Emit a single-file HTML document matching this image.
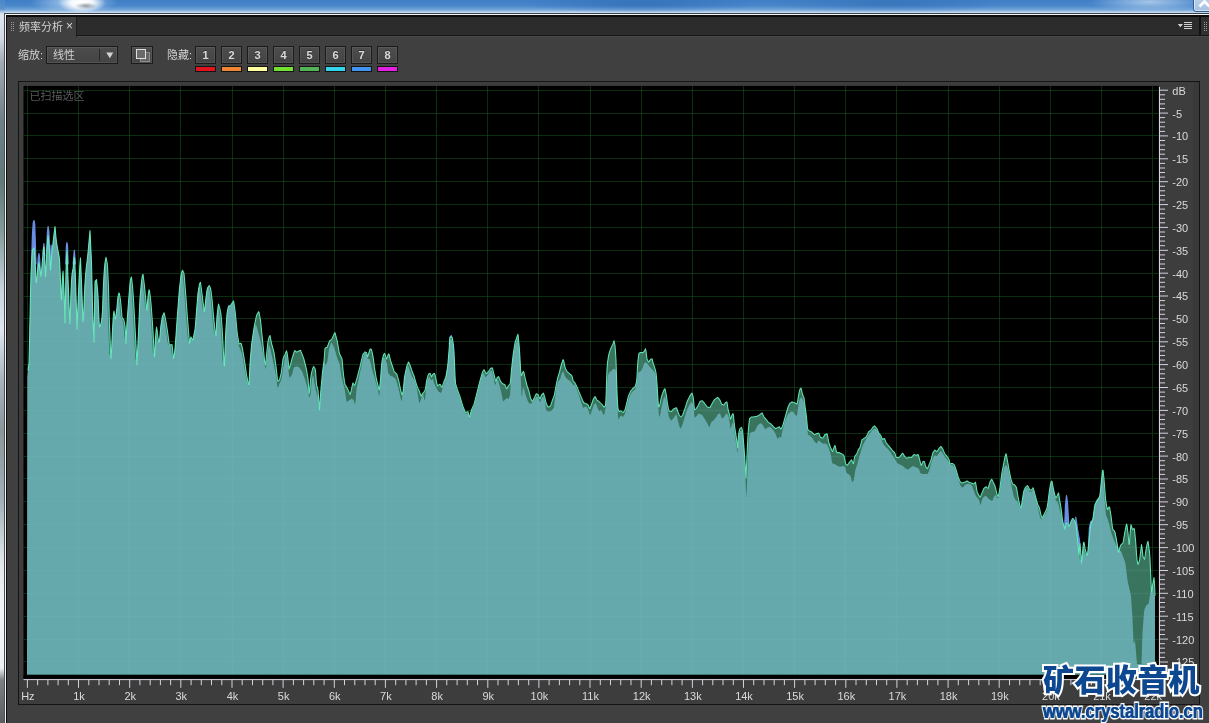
<!DOCTYPE html>
<html lang="zh-CN">
<head>
<meta charset="utf-8">
<title>频率分析</title>
<style>
html,body{margin:0;padding:0;overflow:hidden;}
body{width:1209px;height:723px;overflow:hidden;position:relative;background:#404040;
 font-family:"Liberation Sans","Noto Sans CJK SC",sans-serif;font-size:11px;color:#cfcfcf;}
.abs{position:absolute;}
.lbl,.nb,#tab span,#wm1,#wm2,svg.chart{will-change:transform;}
#aerotop{left:0;top:0;width:1209px;height:14px;
 background:
  radial-gradient(ellipse 11px 3.5px at 86px 6px,rgba(110,120,135,.75),rgba(110,120,135,0) 100%),
  radial-gradient(ellipse 24px 10px at 82px 3px,rgba(255,255,255,1),rgba(255,255,255,.9) 45%,rgba(255,255,255,0) 100%),
  radial-gradient(ellipse 44px 12px at 74px 2px,rgba(200,225,250,.8),rgba(255,255,255,0) 100%),
  radial-gradient(ellipse 60px 10px at 1150px 2px,rgba(190,215,240,.8),rgba(255,255,255,0) 100%),
  radial-gradient(ellipse 120px 9px at 640px 4px,rgba(40,100,170,.55),rgba(40,100,170,0) 100%),
  radial-gradient(ellipse 120px 9px at 890px 4px,rgba(40,100,170,.45),rgba(40,100,170,0) 100%),
  linear-gradient(to bottom,#3f7fc6 0,#4a88cc 6px,#78a8da 10px,#c4daf0 12.5px,#fff 14px);}
#aeroleft{left:0;top:0;width:5px;height:723px;
 background:linear-gradient(to bottom,#4a86c8 0,#5c92cc 9px,#dfe7ef 14px,#d4dbe2 38px,#a2aab2 62px,#6f8088 120px,#5f7a78 180px,#7f9a98 230px,#c8d4dc 290px,#dfe6ec 330px,#a8b4bc 380px,#8a969a 430px,#9fb0b4 500px,#dfe6ea 560px,#f2f5f7 610px,#eef1f3 668px,#7a8084 680px,#5a5e62 723px);}
#frame-l{left:4px;top:13px;width:1px;height:710px;background:#4a5056;}
#frame-l2{left:5px;top:14px;width:1px;height:709px;background:#f4f6f8;}
#frame-l3{left:6px;top:15px;width:1px;height:708px;background:#0c0c0c;}
#frame-t{left:4px;top:13px;width:1205px;height:1px;background:#3a4046;}
#frame-t2{left:5px;top:14px;width:1204px;height:1px;background:#f4f6f8;}
#frame-t3{left:6px;top:15px;width:1203px;height:2px;background:#0c0c0c;}
#closebtn{left:1193px;top:-2px;width:20px;height:12px;border:1px solid #2f5f9a;border-radius:0 0 0 3px;background:linear-gradient(#b8d0ea,#a6c2e2);box-shadow:inset 0 0 0 1px rgba(255,255,255,.5);}
#tabbar{left:7px;top:17px;width:1192px;height:18px;background:#2c2c2c;}
#tabline{left:7px;top:35px;width:1202px;height:1px;background:#161616;box-shadow:0 1px 0 #4a4a4a;}
#tab{left:7px;top:17px;width:69px;height:20px;background:#404040;border-right:1px solid #1c1c1c;box-sizing:content-box;}
#tab .t{position:absolute;left:12px;top:3px;font-size:11px;line-height:14px;color:#d0d0d0;white-space:nowrap;}
#tab .x{position:absolute;left:59px;top:2px;font-size:12px;line-height:14px;color:#d6d6d6;}
.grip{width:1px;height:1px;background:#9a9a9a;
 box-shadow:0 2px #9a9a9a,0 4px #9a9a9a,0 6px #9a9a9a,0 8px #9a9a9a,2px 0 #9a9a9a,2px 2px #9a9a9a,2px 4px #9a9a9a,2px 6px #9a9a9a,2px 8px #9a9a9a;}
#vsep{left:1199px;top:17px;width:1.5px;height:18px;background:#121212;}
#rtab{left:1200.5px;top:17px;width:9px;height:18px;background:#313131;}
#menu{left:1177px;top:21px;width:16px;height:9px;}
.lbl{font-size:11px;line-height:14px;color:#d2d2d2;white-space:nowrap;}
.btn{box-sizing:border-box;border:1px solid #1b1b1b;background:linear-gradient(#4d4d4d,#444);box-shadow:inset 0 0 0 1px rgba(255,255,255,.07);}
.nb{width:21px;height:18px;top:46px;text-align:center;font-size:11px;font-weight:bold;line-height:17px;color:#dadada;text-shadow:0 -1px 0 rgba(0,0,0,.35);}
.cb{box-sizing:border-box;width:21px;height:6px;top:66px;border:1px solid #141414;}
#chartframe{left:18px;top:81px;width:1182px;height:624px;box-sizing:border-box;border:1px solid #141414;background:#3d3d3d;}
svg.chart{position:absolute;left:0;top:0;}
svg .rl{font-family:"Liberation Sans",sans-serif;font-size:11px;fill:#dadada;}
svg .scan{font-family:"Liberation Sans","Noto Sans CJK SC",sans-serif;font-size:11px;fill:#5a5a5a;}
#wm1{left:1042.5px;top:657.5px;font-family:"Noto Sans CJK SC","Liberation Sans",sans-serif;font-weight:900;font-size:31px;line-height:40px;letter-spacing:0.4px;color:#0d4790;white-space:nowrap;
 -webkit-text-stroke:4px #fff;paint-order:stroke fill;}
#wm2{left:1043px;top:698.5px;font-family:"Liberation Sans",sans-serif;font-weight:bold;font-size:20px;line-height:24px;color:#0d4790;white-space:nowrap;letter-spacing:0;transform-origin:0 0;transform:scaleX(0.825);
 -webkit-text-stroke:3.2px #fff;paint-order:stroke fill;text-shadow:0.4px 0 0 #0d4790,-0.4px 0 0 #0d4790;}
</style>
</head>
<body>
<div class="abs" id="aerotop"></div>
<div class="abs" id="aeroleft"></div>
<div class="abs" id="frame-t"></div><div class="abs" id="frame-t2"></div><div class="abs" id="frame-t3"></div>
<div class="abs" id="frame-l"></div><div class="abs" id="frame-l2"></div><div class="abs" id="frame-l3"></div>
<div class="abs" id="closebtn"><svg width="20" height="12" viewBox="0 0 20 12" style="position:absolute;left:0;top:0"><path d="M5.5 7.5 L10.5 2.5 L15.5 7.5" fill="none" stroke="#fff" stroke-width="2.6" stroke-linejoin="miter"/></svg></div>

<div class="abs" id="tabbar"></div>
<div class="abs" id="tabline"></div>
<div class="abs" id="tab"><div class="abs grip" style="left:4px;top:5px"></div><span class="t">频率分析</span><span class="x">×</span></div>
<div class="abs" id="vsep"></div>
<div class="abs" id="rtab"><div class="abs grip" style="left:3px;top:5px"></div></div>
<svg class="abs" id="menu" viewBox="0 0 16 9"><path d="M0.8 3 H6 L3.4 6.2Z" fill="#d0d0d0"/><path d="M7 1.5H15M7 3.5H15M7 5.5H15M7 7.5H15" stroke="#cfcfcf" stroke-width="1"/></svg>

<!-- toolbar -->
<div class="abs lbl" style="left:18px;top:48px">缩放:</div>
<div class="abs btn" style="left:46px;top:46px;width:72px;height:18px">
  <span class="abs lbl" style="left:6px;top:1px">线性</span>
  <div class="abs" style="left:52px;top:2px;width:1px;height:12px;background:#262626"></div>
  <svg class="abs" style="left:58px;top:5px" width="10" height="7" viewBox="0 0 10 7"><path d="M1.3 0.6H8.3L4.8 6.2Z" fill="#d4d4d4"/></svg>
</div>
<div class="abs btn" style="left:131px;top:46px;width:22px;height:18px">
  <svg class="abs" style="left:3px;top:1px" width="16" height="15" viewBox="0 0 16 15"><rect x="5.5" y="4.5" width="9" height="9" fill="#666" stroke="#c4c4c4" stroke-dasharray="1 1"/><rect x="1.5" y="1.5" width="9" height="9" fill="#6a6a6a" stroke="#e0e0e0"/></svg>
</div>
<div class="abs lbl" style="left:167px;top:48px">隐藏:</div>
<div class="abs btn nb" style="left:195px">1</div>
<div class="abs btn nb" style="left:221px">2</div>
<div class="abs btn nb" style="left:247px">3</div>
<div class="abs btn nb" style="left:273px">4</div>
<div class="abs btn nb" style="left:299px">5</div>
<div class="abs btn nb" style="left:325px">6</div>
<div class="abs btn nb" style="left:351px">7</div>
<div class="abs btn nb" style="left:377px">8</div>
<div class="abs cb" style="left:195px;background:#e0141e"></div>
<div class="abs cb" style="left:221px;background:#f08634"></div>
<div class="abs cb" style="left:247px;background:#ffffa2"></div>
<div class="abs cb" style="left:273px;background:#74e032"></div>
<div class="abs cb" style="left:299px;background:#52b456"></div>
<div class="abs cb" style="left:325px;background:#34d4ea"></div>
<div class="abs cb" style="left:351px;background:#4292f0"></div>
<div class="abs cb" style="left:377px;background:#e022e0"></div>

<div class="abs" id="chartframe"><div class="abs" style="right:0;top:0;width:6px;height:622px;background:#393939"></div></div>
<svg class="chart" width="1209" height="723" viewBox="0 0 1209 723">
<rect x="23.5" y="85.9" width="1135.2" height="592.7" fill="#000"/>
<path d="M27.5 85.9V678.6M78.5 85.9V678.6M129.5 85.9V678.6M180.5 85.9V678.6M232.5 85.9V678.6M283.5 85.9V678.6M334.5 85.9V678.6M385.5 85.9V678.6M436.5 85.9V678.6M487.5 85.9V678.6M538.5 85.9V678.6M590.5 85.9V678.6M641.5 85.9V678.6M692.5 85.9V678.6M743.5 85.9V678.6M794.5 85.9V678.6M845.5 85.9V678.6M896.5 85.9V678.6M948.5 85.9V678.6M999.5 85.9V678.6M1050.5 85.9V678.6M1101.5 85.9V678.6M1152.5 85.9V678.6M23.5 90.5H1158.7M23.5 113.5H1158.7M23.5 135.5H1158.7M23.5 158.5H1158.7M23.5 181.5H1158.7M23.5 204.5H1158.7M23.5 227.5H1158.7M23.5 250.5H1158.7M23.5 273.5H1158.7M23.5 296.5H1158.7M23.5 318.5H1158.7M23.5 341.5H1158.7M23.5 364.5H1158.7M23.5 387.5H1158.7M23.5 410.5H1158.7M23.5 433.5H1158.7M23.5 456.5H1158.7M23.5 478.5H1158.7M23.5 501.5H1158.7M23.5 524.5H1158.7M23.5 547.5H1158.7M23.5 570.5H1158.7M23.5 593.5H1158.7M23.5 616.5H1158.7M23.5 639.5H1158.7M23.5 661.5H1158.7" stroke="#12501a" stroke-width="1" fill="none" opacity="0.58"/>
<polygon points="31.6,262 32.4,236 33.2,223 34,220.5 34.7,224 35.4,245 35.9,264" fill="#6b8fe2" stroke="#6b8fe2" stroke-width="1.2" stroke-linejoin="round"/>
<polygon points="37.5,272 38.2,258 38.9,253.7 39.6,258 40.3,272" fill="#6b8fe2" stroke="#6b8fe2" stroke-width="1.2" stroke-linejoin="round"/>
<polygon points="42.9,254 43.9,243.5 44.8,256" fill="#6b8fe2" stroke="#6b8fe2" stroke-width="1.2" stroke-linejoin="round"/>
<polygon points="46.7,252 47.4,232 48.1,226.6 48.9,232 49.6,252" fill="#6b8fe2" stroke="#6b8fe2" stroke-width="1.2" stroke-linejoin="round"/>
<polygon points="50.3,266 51.1,245 52,258" fill="#6b8fe2" stroke="#6b8fe2" stroke-width="1.2" stroke-linejoin="round"/>
<polygon points="65.8,264 66.4,246 66.9,242.6 67.5,246 68.1,264" fill="#6b8fe2" stroke="#6b8fe2" stroke-width="1.2" stroke-linejoin="round"/>
<polygon points="73.2,264 74.3,250.4 75.4,264" fill="#6b8fe2" stroke="#6b8fe2" stroke-width="1.2" stroke-linejoin="round"/>
<polygon points="449.3,344 450.2,337 451.2,335.5 452.2,341 452.6,346" fill="#6b8fe2" stroke="#6b8fe2" stroke-width="1.2" stroke-linejoin="round"/>
<polygon points="1064.5,532 1065.5,505 1066.5,495.6 1067.5,503 1068.8,525 1068.8,536" fill="#6b8fe2" stroke="#6b8fe2" stroke-width="1.2" stroke-linejoin="round"/>
<polygon points="1075.8,517 1077.5,529 1079.6,541 1079.6,560 1075.8,560" fill="#6b8fe2" stroke="#6b8fe2" stroke-width="1.2" stroke-linejoin="round"/>
<polygon points="1088.4,548 1089.4,528 1090.6,522 1091.8,521 1091.8,548" fill="#6b8fe2" stroke="#6b8fe2" stroke-width="1.2" stroke-linejoin="round"/>
<polygon points="1113.3,530 1115,533 1117,545 1118.5,552 1118.5,562 1113.3,562" fill="#6b8fe2" stroke="#6b8fe2" stroke-width="1.2" stroke-linejoin="round"/>
<defs><polygon id="pe" points="27.0,674.8 27.0,674.8 27.5,377.0 28.0,370.5 28.5,366.8 29.0,363.2 29.5,341.8 30.0,316.5 30.5,292.8 31.0,273.3 31.5,263.2 32.0,256.5 32.5,250.0 33.0,249.3 33.5,248.7 34.0,248.0 34.5,253.8 35.0,259.7 35.5,269.2 36.0,281.2 36.5,282.6 37.0,276.9 37.5,271.1 38.0,267.5 38.5,264.5 39.0,262.7 39.5,266.4 40.0,270.0 40.5,273.2 41.0,276.4 41.5,271.9 42.0,265.6 42.5,259.3 43.0,254.0 43.5,249.0 44.0,246.9 44.5,254.8 45.0,265.8 45.5,276.8 46.0,269.3 46.5,257.2 47.0,247.5 47.5,241.4 48.0,235.2 48.5,239.3 49.0,245.8 49.5,252.5 50.0,259.8 50.5,270.0 51.0,264.0 51.5,258.0 52.0,252.0 52.5,247.6 53.0,243.1 53.5,238.7 54.0,234.4 54.5,230.5 55.0,226.6 55.5,232.2 56.0,237.8 56.5,241.9 57.0,245.2 57.5,248.0 58.0,250.5 58.5,253.1 59.0,255.6 59.5,259.5 60.0,269.2 60.5,281.0 61.0,296.0 61.5,299.9 62.0,287.1 62.5,277.9 63.0,271.0 63.5,280.5 64.0,290.0 64.5,306.5 65.0,323.0 65.5,296.5 66.0,270.0 66.5,257.8 67.0,250.7 67.5,264.2 68.0,277.6 68.5,290.6 69.0,303.6 69.5,316.6 70.0,323.8 70.5,307.6 71.0,291.5 71.5,281.0 72.0,274.3 72.5,271.2 73.0,268.9 73.5,264.2 74.0,257.8 74.5,257.8 75.0,267.4 75.5,278.4 76.0,295.2 76.5,312.1 77.0,329.0 77.5,316.8 78.0,304.6 78.5,292.3 79.0,281.3 79.5,272.1 80.0,262.8 80.5,257.9 81.0,270.2 81.5,282.6 82.0,295.3 82.5,308.5 83.0,321.7 83.5,319.1 84.0,306.0 84.5,292.9 85.0,282.5 85.5,276.2 86.0,270.0 86.5,265.8 87.0,261.7 87.5,257.5 88.0,252.8 88.5,247.2 89.0,241.6 89.5,236.1 90.0,230.5 90.5,241.0 91.0,251.5 91.5,262.0 92.0,283.8 92.5,305.6 93.0,319.1 93.5,330.6 94.0,342.0 94.5,311.8 95.0,281.5 95.5,280.8 96.0,280.2 96.5,279.5 97.0,284.4 97.5,289.2 98.0,295.6 98.5,308.1 99.0,320.5 99.5,327.0 100.0,326.2 100.5,324.9 101.0,323.6 101.5,321.0 102.0,317.4 102.5,310.3 103.0,295.7 103.5,284.1 104.0,274.4 104.5,267.9 105.0,262.5 105.5,259.9 106.0,257.3 106.5,259.7 107.0,262.1 107.5,266.1 108.0,276.6 108.5,287.1 109.0,307.5 109.5,325.7 110.0,336.7 110.5,350.7 111.0,358.7 111.5,351.9 112.0,340.8 112.5,330.1 113.0,320.9 113.5,314.4 114.0,311.0 114.5,314.5 115.0,318.1 115.5,318.8 116.0,315.4 116.5,311.9 117.0,307.1 117.5,301.5 118.0,296.6 118.5,294.7 119.0,292.9 119.5,294.0 120.0,297.1 120.5,300.2 121.0,305.5 121.5,311.3 122.0,317.1 122.5,318.5 123.0,318.8 123.5,319.1 124.0,320.8 124.5,323.4 125.0,326.0 125.5,332.5 126.0,343.4 126.5,332.4 127.0,322.8 127.5,315.9 128.0,309.0 128.5,302.3 129.0,295.8 129.5,289.8 130.0,283.9 130.5,280.1 131.0,277.9 131.5,277.0 132.0,281.7 132.5,286.4 133.0,292.8 133.5,299.3 134.0,308.2 134.5,317.2 135.0,326.7 135.5,336.4 136.0,346.0 136.5,354.8 137.0,364.7 137.5,353.7 138.0,342.7 138.5,331.7 139.0,320.7 139.5,309.0 140.0,297.8 140.5,292.4 141.0,286.9 141.5,281.5 142.0,278.2 142.5,274.8 143.0,274.4 143.5,278.3 144.0,282.2 144.5,286.3 145.0,291.6 145.5,296.8 146.0,302.3 146.5,308.0 147.0,310.3 147.5,302.3 148.0,296.8 148.5,293.2 149.0,289.7 149.5,290.6 150.0,294.6 150.5,298.5 151.0,303.5 151.5,310.0 152.0,316.7 152.5,323.5 153.0,332.0 153.5,340.9 154.0,349.9 154.5,356.7 155.0,349.6 155.5,338.0 156.0,331.8 156.5,327.0 157.0,329.6 157.5,334.0 158.0,338.0 158.5,340.1 159.0,342.2 159.5,341.1 160.0,335.3 160.5,329.5 161.0,324.8 161.5,321.8 162.0,318.7 162.5,316.1 163.0,315.0 163.5,313.8 164.0,312.7 164.5,314.4 165.0,316.8 165.5,319.2 166.0,322.0 166.5,325.1 167.0,328.1 167.5,331.2 168.0,335.1 168.5,339.3 169.0,343.4 169.5,344.1 170.0,344.7 170.5,345.4 171.0,345.1 171.5,344.8 172.0,344.5 172.5,348.9 173.0,354.4 173.5,358.4 174.0,355.6 174.5,352.9 175.0,348.6 175.5,342.1 176.0,335.4 176.5,328.2 177.0,320.9 177.5,313.8 178.0,307.3 178.5,300.8 179.0,294.4 179.5,288.3 180.0,284.0 180.5,279.7 181.0,275.4 181.5,272.9 182.0,271.5 182.5,270.2 183.0,271.3 183.5,272.4 184.0,273.5 184.5,278.9 185.0,285.3 185.5,291.8 186.0,298.3 186.5,305.1 187.0,312.1 187.5,318.5 188.0,324.4 188.5,330.6 189.0,337.0 189.5,343.4 190.0,341.0 190.5,338.6 191.0,336.9 191.5,337.9 192.0,338.9 192.5,339.9 193.0,339.5 193.5,337.0 194.0,334.5 194.5,332.0 195.0,329.5 195.5,324.8 196.0,317.9 196.5,311.4 197.0,305.0 197.5,299.1 198.0,293.1 198.5,290.1 199.0,287.0 199.5,284.0 200.0,283.0 200.5,282.4 201.0,286.2 201.5,290.0 202.0,293.9 202.5,297.9 203.0,302.0 203.5,305.8 204.0,309.5 204.5,311.5 205.0,306.7 205.5,301.8 206.0,297.5 206.5,294.0 207.0,290.4 207.5,288.0 208.0,287.2 208.5,286.5 209.0,285.8 209.5,285.8 210.0,287.1 210.5,288.4 211.0,290.9 211.5,295.0 212.0,299.1 212.5,304.4 213.0,310.3 213.5,316.3 214.0,321.1 214.5,326.0 215.0,330.8 215.5,333.5 216.0,335.7 216.5,324.7 217.0,316.3 217.5,311.8 218.0,307.3 218.5,304.0 219.0,305.7 219.5,307.3 220.0,309.1 220.5,311.9 221.0,314.6 221.5,319.8 222.0,326.3 222.5,335.1 223.0,344.1 223.5,353.8 224.0,363.5 224.5,365.8 225.0,351.6 225.5,337.5 226.0,327.7 226.5,320.8 227.0,313.9 227.5,310.7 228.0,308.4 228.5,306.2 229.0,305.8 229.5,306.0 230.0,306.2 230.5,305.4 231.0,304.7 231.5,303.9 232.0,303.2 232.5,302.4 233.0,301.7 233.5,300.9 234.0,303.6 234.5,307.1 235.0,310.6 235.5,314.5 236.0,320.0 236.5,325.5 237.0,331.0 237.5,335.0 238.0,338.0 238.5,341.0 239.0,344.0 239.5,343.8 240.0,343.6 240.5,343.4 241.0,343.2 241.5,344.5 242.0,346.7 242.5,348.9 243.0,351.8 243.5,354.8 244.0,357.7 244.5,360.8 245.0,364.2 245.5,367.6 246.0,371.1 246.5,374.5 247.0,377.1 247.5,379.8 248.0,382.4 248.5,385.0 249.0,384.9 249.5,373.9 250.0,363.6 250.5,357.1 251.0,351.2 251.5,345.2 252.0,341.3 252.5,338.0 253.0,334.7 253.5,331.3 254.0,328.0 254.5,325.1 255.0,322.7 255.5,320.4 256.0,318.0 256.5,315.7 257.0,314.5 257.5,313.6 258.0,312.7 258.5,311.7 259.0,312.2 259.5,314.9 260.0,317.5 260.5,320.1 261.0,324.7 261.5,329.9 262.0,335.0 262.5,339.8 263.0,344.7 263.5,349.7 264.0,354.9 264.5,360.1 265.0,362.6 265.5,365.0 266.0,361.1 266.5,355.6 267.0,350.3 267.5,345.8 268.0,341.3 268.5,339.2 269.0,337.7 269.5,336.2 270.0,335.5 270.5,338.0 271.0,340.5 271.5,343.0 272.0,345.1 272.5,347.0 273.0,348.8 273.5,350.7 274.0,352.5 274.5,355.7 275.0,359.2 275.5,362.7 276.0,366.4 276.5,370.9 277.0,375.4 277.5,379.9 278.0,381.4 278.5,380.9 279.0,380.4 279.5,379.9 280.0,377.9 280.5,375.9 281.0,373.9 281.5,371.1 282.0,367.1 282.5,363.1 283.0,359.1 283.5,357.5 284.0,356.5 284.5,355.5 285.0,354.5 285.5,353.2 286.0,352.0 286.5,350.8 287.0,352.3 287.5,355.6 288.0,359.3 288.5,364.2 289.0,369.1 289.5,367.7 290.0,366.3 290.5,364.7 291.0,362.7 291.5,360.7 292.0,358.7 292.5,357.1 293.0,355.5 293.5,354.0 294.0,352.5 294.5,350.9 295.0,350.6 295.5,351.1 296.0,351.6 296.5,352.1 297.0,351.9 297.5,351.6 298.0,351.4 298.5,351.1 299.0,350.9 299.5,350.7 300.0,350.5 300.5,350.3 301.0,351.6 301.5,352.8 302.0,354.1 302.5,355.3 303.0,356.6 303.5,357.8 304.0,359.5 304.5,361.5 305.0,363.5 305.5,365.5 306.0,367.5 306.5,369.7 307.0,372.7 307.5,375.7 308.0,378.7 308.5,385.2 309.0,393.9 309.5,391.7 310.0,386.2 310.5,380.7 311.0,375.8 311.5,373.4 312.0,371.0 312.5,368.9 313.0,367.8 313.5,366.6 314.0,367.0 314.5,367.8 315.0,368.5 315.5,370.7 316.0,377.2 316.5,384.3 317.0,386.3 317.5,388.3 318.0,390.3 318.5,396.8 319.0,403.8 319.5,410.1 320.0,401.8 320.5,395.0 321.0,388.5 321.5,383.0 322.0,377.5 322.5,372.0 323.0,368.1 323.5,364.6 324.0,361.1 324.5,354.7 325.0,348.2 325.5,348.0 326.0,347.8 326.5,347.6 327.0,347.4 327.5,346.5 328.0,345.1 328.5,343.7 329.0,342.4 329.5,341.0 330.0,340.6 330.5,340.2 331.0,339.8 331.5,339.4 332.0,338.8 332.5,337.6 333.0,336.5 333.5,335.4 334.0,334.3 334.5,333.2 335.0,332.7 335.5,334.6 336.0,336.5 336.5,338.4 337.0,340.2 337.5,342.7 338.0,345.6 338.5,348.4 339.0,351.3 339.5,353.8 340.0,354.8 340.5,355.8 341.0,356.8 341.5,357.8 342.0,358.8 342.5,363.8 343.0,369.7 343.5,374.7 344.0,378.3 344.5,381.9 345.0,384.4 345.5,385.3 346.0,386.1 346.5,386.9 347.0,387.8 347.5,388.6 348.0,389.8 348.5,390.9 349.0,392.1 349.5,393.3 350.0,394.4 350.5,393.5 351.0,391.3 351.5,389.0 352.0,386.8 352.5,384.5 353.0,382.9 353.5,383.8 354.0,384.7 354.5,385.5 355.0,384.9 355.5,383.2 356.0,381.6 356.5,379.9 357.0,378.2 357.5,376.5 358.0,374.5 358.5,372.5 359.0,370.6 359.5,368.6 360.0,366.6 360.5,364.5 361.0,362.3 361.5,360.1 362.0,358.0 362.5,355.8 363.0,354.2 363.5,353.6 364.0,353.0 364.5,352.3 365.0,351.9 365.5,352.1 366.0,352.4 366.5,352.6 367.0,354.2 367.5,356.7 368.0,355.9 368.5,354.2 369.0,352.5 369.5,350.8 370.0,349.1 370.5,349.1 371.0,349.1 371.5,349.6 372.0,351.8 372.5,354.1 373.0,356.3 373.5,359.7 374.0,363.8 374.5,367.9 375.0,370.9 375.5,373.9 376.0,376.9 376.5,379.5 377.0,381.5 377.5,383.5 378.0,385.5 378.5,387.7 379.0,389.9 379.5,389.4 380.0,384.6 380.5,379.8 381.0,372.3 381.5,365.8 382.0,361.2 382.5,359.0 383.0,356.8 383.5,354.5 384.0,354.0 384.5,353.4 385.0,354.2 385.5,355.8 386.0,357.4 386.5,359.0 387.0,357.7 387.5,356.5 388.0,355.2 388.5,354.0 389.0,354.0 389.5,356.2 390.0,358.3 390.5,360.4 391.0,362.0 391.5,363.5 392.0,365.0 392.5,366.5 393.0,368.0 393.5,369.4 394.0,370.9 394.5,371.8 395.0,372.3 395.5,372.8 396.0,373.3 396.5,373.8 397.0,374.6 397.5,376.3 398.0,378.1 398.5,379.8 399.0,382.0 399.5,384.5 400.0,387.0 400.5,389.5 401.0,391.3 401.5,393.1 402.0,394.9 402.5,393.4 403.0,391.9 403.5,388.0 404.0,382.4 404.5,376.9 405.0,374.6 405.5,372.2 406.0,369.9 406.5,367.6 407.0,365.7 407.5,364.5 408.0,363.2 408.5,362.0 409.0,362.7 409.5,363.9 410.0,365.2 410.5,366.5 411.0,368.0 411.5,369.4 412.0,370.9 412.5,372.2 413.0,373.5 413.5,374.8 414.0,376.0 414.5,377.8 415.0,379.5 415.5,381.2 416.0,382.9 416.5,384.4 417.0,385.9 417.5,387.4 418.0,388.5 418.5,389.5 419.0,390.5 419.5,391.6 420.0,393.1 420.5,394.6 421.0,396.1 421.5,395.8 422.0,394.3 422.5,393.6 423.0,393.1 423.5,392.6 424.0,392.0 424.5,391.1 425.0,390.2 425.5,388.7 426.0,385.0 426.5,381.3 427.0,379.1 427.5,377.4 428.0,375.6 428.5,374.1 429.0,373.9 429.5,373.6 430.0,373.4 430.5,374.1 431.0,375.5 431.5,376.9 432.0,375.9 432.5,375.0 433.0,374.1 433.5,373.9 434.0,373.6 434.5,373.4 435.0,374.7 435.5,377.1 436.0,379.5 436.5,381.9 437.0,384.1 437.5,385.8 438.0,385.5 438.5,385.1 439.0,384.8 439.5,384.5 440.0,384.2 440.5,384.9 441.0,385.9 441.5,386.9 442.0,387.4 442.5,385.9 443.0,384.4 443.5,382.9 444.0,381.6 444.5,380.3 445.0,379.1 445.5,377.9 446.0,376.3 446.5,373.3 447.0,370.4 447.5,367.4 448.0,362.7 448.5,356.9 449.0,350.7 449.5,343.5 450.0,337.0 450.5,337.0 451.0,337.0 451.5,337.0 452.0,337.0 452.5,338.9 453.0,342.1 453.5,345.4 454.0,351.9 454.5,362.8 455.0,375.6 455.5,383.5 456.0,385.2 456.5,386.8 457.0,388.4 457.5,389.9 458.0,391.2 458.5,392.6 459.0,393.9 459.5,395.2 460.0,396.6 460.5,398.3 461.0,400.0 461.5,401.6 462.0,403.3 462.5,405.0 463.0,406.4 463.5,407.7 464.0,409.0 464.5,410.4 465.0,411.7 465.5,412.4 466.0,412.3 466.5,412.1 467.0,411.9 467.5,411.8 468.0,411.6 468.5,413.9 469.0,416.1 469.5,417.5 470.0,415.5 470.5,413.5 471.0,411.5 471.5,410.0 472.0,408.8 472.5,407.7 473.0,406.5 473.5,405.4 474.0,404.2 474.5,402.7 475.0,400.7 475.5,398.7 476.0,396.7 476.5,394.7 477.0,392.7 477.5,390.7 478.0,388.7 478.5,386.7 479.0,384.7 479.5,382.7 480.0,380.8 480.5,379.0 481.0,377.2 481.5,375.4 482.0,373.6 482.5,371.9 483.0,371.2 483.5,370.4 484.0,369.7 484.5,370.1 485.0,371.4 485.5,372.6 486.0,373.8 486.5,373.4 487.0,373.0 487.5,372.6 488.0,372.2 488.5,371.5 489.0,370.8 489.5,370.0 490.0,369.2 490.5,368.5 491.0,368.2 491.5,368.0 492.0,367.8 492.5,368.4 493.0,370.4 493.5,372.3 494.0,374.3 494.5,376.3 495.0,378.3 495.5,380.3 496.0,381.5 496.5,379.6 497.0,377.8 497.5,377.2 498.0,376.9 498.5,376.6 499.0,377.5 499.5,378.8 500.0,380.0 500.5,381.1 501.0,381.8 501.5,382.4 502.0,383.1 502.5,383.7 503.0,383.9 503.5,384.1 504.0,384.3 504.5,384.5 505.0,384.9 505.5,386.1 506.0,387.4 506.5,388.6 507.0,388.5 507.5,387.5 508.0,386.5 508.5,385.5 509.0,385.0 509.5,384.5 510.0,384.0 510.5,381.3 511.0,375.4 511.5,369.4 512.0,364.9 512.5,360.4 513.0,355.9 513.5,352.0 514.0,349.0 514.5,346.0 515.0,343.0 515.5,341.2 516.0,339.7 516.5,338.2 517.0,336.8 517.5,335.5 518.0,334.3 518.5,339.2 519.0,344.0 519.5,350.5 520.0,358.5 520.5,368.5 521.0,374.2 521.5,375.6 522.0,374.2 522.5,372.7 523.0,371.8 523.5,371.4 524.0,372.6 524.5,375.0 525.0,377.4 525.5,379.5 526.0,381.5 526.5,383.5 527.0,385.5 527.5,387.0 528.0,388.5 528.5,390.0 529.0,391.7 529.5,393.7 530.0,395.7 530.5,397.7 531.0,398.9 531.5,399.9 532.0,400.9 532.5,401.5 533.0,400.5 533.5,399.5 534.0,398.5 534.5,397.5 535.0,396.4 535.5,395.3 536.0,394.2 536.5,393.7 537.0,394.0 537.5,394.2 538.0,394.4 538.5,395.5 539.0,396.8 539.5,398.0 540.0,398.7 540.5,397.5 541.0,396.3 541.5,395.0 542.0,394.3 542.5,393.9 543.0,393.5 543.5,393.1 544.0,394.8 544.5,396.4 545.0,398.1 545.5,400.3 546.0,402.6 546.5,404.1 547.0,405.1 547.5,406.1 548.0,407.1 548.5,406.9 549.0,406.7 549.5,406.5 550.0,406.3 550.5,405.9 551.0,404.4 551.5,402.9 552.0,401.4 552.5,399.9 553.0,398.6 553.5,397.4 554.0,396.1 554.5,394.3 555.0,391.5 555.5,388.8 556.0,386.1 556.5,383.6 557.0,381.2 557.5,378.8 558.0,376.9 558.5,375.3 559.0,373.6 559.5,371.9 560.0,370.0 560.5,368.0 561.0,366.0 561.5,364.0 562.0,362.6 562.5,361.2 563.0,359.7 563.5,359.9 564.0,362.3 564.5,364.7 565.0,367.1 565.5,368.4 566.0,369.4 566.5,370.4 567.0,371.3 567.5,371.8 568.0,372.3 568.5,372.7 569.0,373.2 569.5,373.7 570.0,374.1 570.5,374.5 571.0,374.9 571.5,375.3 572.0,376.0 572.5,378.1 573.0,380.2 573.5,381.3 574.0,381.8 574.5,382.4 575.0,382.9 575.5,383.9 576.0,384.9 576.5,385.9 577.0,387.0 577.5,388.2 578.0,389.4 578.5,390.7 579.0,391.9 579.5,393.1 580.0,394.2 580.5,395.4 581.0,396.6 581.5,397.8 582.0,398.9 582.5,400.1 583.0,401.3 583.5,402.5 584.0,402.9 584.5,403.1 585.0,403.3 585.5,403.5 586.0,403.7 586.5,403.9 587.0,404.1 587.5,404.3 588.0,404.8 588.5,406.0 589.0,407.2 589.5,408.5 590.0,408.3 590.5,407.0 591.0,405.8 591.5,404.5 592.0,403.0 592.5,401.5 593.0,400.0 593.5,398.8 594.0,398.0 594.5,397.3 595.0,396.6 595.5,397.2 596.0,398.2 596.5,399.2 597.0,400.1 597.5,400.5 598.0,400.8 598.5,401.2 599.0,401.6 599.5,402.0 600.0,402.5 600.5,403.0 601.0,403.5 601.5,404.0 602.0,404.5 602.5,405.1 603.0,405.8 603.5,406.4 604.0,407.1 604.5,406.7 605.0,406.1 605.5,405.5 606.0,398.4 606.5,382.5 607.0,369.1 607.5,362.6 608.0,359.3 608.5,356.1 609.0,353.6 609.5,352.1 610.0,350.6 610.5,349.1 611.0,348.0 611.5,347.0 612.0,345.9 612.5,344.9 613.0,343.7 613.5,342.2 614.0,340.7 614.5,343.1 615.0,345.5 615.5,352.0 616.0,360.2 616.5,376.9 617.0,392.3 617.5,402.8 618.0,408.7 618.5,410.0 619.0,411.4 619.5,411.5 620.0,411.2 620.5,411.0 621.0,410.9 621.5,411.3 622.0,411.7 622.5,412.1 623.0,412.4 623.5,412.2 624.0,411.4 624.5,410.7 625.0,409.9 625.5,407.9 626.0,405.9 626.5,403.9 627.0,401.9 627.5,399.9 628.0,397.9 628.5,395.9 629.0,394.7 629.5,393.7 630.0,392.6 630.5,391.6 631.0,390.7 631.5,390.1 632.0,389.5 632.5,388.8 633.0,388.2 633.5,387.8 634.0,387.5 634.5,387.1 635.0,386.7 635.5,385.7 636.0,383.7 636.5,381.8 637.0,376.9 637.5,367.0 638.0,360.5 638.5,356.0 639.0,353.2 639.5,352.9 640.0,352.7 640.5,352.4 641.0,352.4 641.5,352.5 642.0,352.6 642.5,352.6 643.0,352.7 643.5,352.2 644.0,351.7 644.5,350.9 645.0,349.8 645.5,348.8 646.0,351.0 646.5,355.3 647.0,358.9 647.5,359.9 648.0,360.9 648.5,361.9 649.0,361.8 649.5,360.9 650.0,360.0 650.5,359.5 651.0,359.2 651.5,358.9 652.0,358.7 652.5,360.6 653.0,362.4 653.5,364.1 654.0,365.6 654.5,367.1 655.0,368.6 655.5,370.7 656.0,372.8 656.5,377.3 657.0,383.8 657.5,391.9 658.0,399.8 658.5,406.5 659.0,407.0 659.5,405.6 660.0,404.0 660.5,401.4 661.0,398.8 661.5,396.7 662.0,395.2 662.5,393.7 663.0,392.2 663.5,391.1 664.0,390.1 664.5,389.1 665.0,388.8 665.5,391.2 666.0,393.6 666.5,396.3 667.0,400.0 667.5,403.7 668.0,406.4 668.5,408.9 669.0,410.8 669.5,411.0 670.0,411.2 670.5,411.4 671.0,411.6 671.5,411.4 672.0,410.8 672.5,410.2 673.0,409.7 673.5,409.1 674.0,408.8 674.5,408.6 675.0,408.3 675.5,408.1 676.0,408.0 676.5,407.8 677.0,409.0 677.5,410.5 678.0,412.0 678.5,413.2 679.0,414.5 679.5,415.5 680.0,416.0 680.5,416.5 681.0,417.0 681.5,416.5 682.0,415.8 682.5,415.0 683.0,414.1 683.5,412.7 684.0,411.2 684.5,409.8 685.0,408.4 685.5,406.8 686.0,405.3 686.5,403.7 687.0,402.2 687.5,400.7 688.0,399.7 688.5,398.7 689.0,397.8 689.5,396.8 690.0,395.9 690.5,395.1 691.0,394.3 691.5,393.5 692.0,393.1 692.5,394.7 693.0,396.3 693.5,399.6 694.0,405.3 694.5,409.8 695.0,409.5 695.5,409.2 696.0,408.8 696.5,408.1 697.0,407.3 697.5,406.5 698.0,405.7 698.5,404.8 699.0,403.7 699.5,402.6 700.0,401.5 700.5,401.3 701.0,401.1 701.5,400.9 702.0,400.7 702.5,401.0 703.0,401.5 703.5,402.1 704.0,402.7 704.5,403.3 705.0,404.0 705.5,404.6 706.0,405.3 706.5,406.0 707.0,406.6 707.5,407.0 708.0,407.2 708.5,407.3 709.0,407.5 709.5,407.7 710.0,407.6 710.5,406.6 711.0,405.6 711.5,404.7 712.0,403.7 712.5,402.8 713.0,402.0 713.5,401.2 714.0,400.4 714.5,399.6 715.0,399.2 715.5,398.9 716.0,398.5 716.5,398.1 717.0,397.8 717.5,397.4 718.0,397.7 718.5,398.3 719.0,398.8 719.5,399.4 720.0,400.2 720.5,401.5 721.0,402.7 721.5,403.9 722.0,404.4 722.5,404.6 723.0,404.8 723.5,405.0 724.0,404.7 724.5,403.9 725.0,403.2 725.5,402.4 726.0,402.3 726.5,402.1 727.0,402.0 727.5,405.7 728.0,409.1 728.5,410.9 729.0,412.8 729.5,414.9 730.0,417.0 730.5,419.1 731.0,418.2 731.5,416.6 732.0,415.0 732.5,414.3 733.0,413.6 733.5,415.6 734.0,421.6 734.5,425.9 735.0,429.1 735.5,432.3 736.0,435.7 736.5,439.1 737.0,443.3 737.5,447.9 738.0,441.6 738.5,435.4 739.0,431.8 739.5,430.0 740.0,428.4 740.5,428.1 741.0,427.7 741.5,427.3 742.0,428.8 742.5,431.3 743.0,435.4 743.5,441.6 744.0,447.9 744.5,454.4 745.0,462.0 745.5,470.0 746.0,477.9 746.5,466.9 747.0,455.9 747.5,444.9 748.0,434.8 748.5,428.3 749.0,423.4 749.5,418.6 750.0,418.2 750.5,417.8 751.0,417.3 751.5,417.1 752.0,417.0 752.5,417.0 753.0,416.9 753.5,416.9 754.0,416.8 754.5,416.7 755.0,416.7 755.5,416.6 756.0,416.5 756.5,416.4 757.0,416.2 757.5,416.0 758.0,415.7 758.5,415.5 759.0,415.2 759.5,414.9 760.0,414.5 760.5,414.1 761.0,413.7 761.5,413.3 762.0,412.9 762.5,413.7 763.0,414.9 763.5,416.1 764.0,417.0 764.5,417.6 765.0,418.1 765.5,418.7 766.0,419.3 766.5,419.9 767.0,420.5 767.5,421.2 768.0,421.8 768.5,422.3 769.0,422.7 769.5,423.0 770.0,423.3 770.5,423.7 771.0,424.0 771.5,424.6 772.0,425.1 772.5,425.7 773.0,426.2 773.5,426.8 774.0,427.2 774.5,427.6 775.0,428.1 775.5,428.5 776.0,428.3 776.5,428.1 777.0,427.9 777.5,427.7 778.0,427.5 778.5,427.2 779.0,426.9 779.5,426.7 780.0,427.7 780.5,428.6 781.0,429.2 781.5,428.2 782.0,427.2 782.5,426.2 783.0,424.8 783.5,423.0 784.0,421.3 784.5,419.5 785.0,417.7 785.5,416.0 786.0,414.2 786.5,412.5 787.0,410.7 787.5,409.0 788.0,407.3 788.5,406.1 789.0,405.1 789.5,404.1 790.0,403.2 790.5,402.9 791.0,402.5 791.5,402.1 792.0,402.1 792.5,402.1 793.0,402.2 793.5,402.3 794.0,402.4 794.5,402.7 795.0,402.9 795.5,403.2 796.0,403.5 796.5,403.8 797.0,404.1 797.5,401.8 798.0,398.8 798.5,395.8 799.0,393.3 799.5,390.8 800.0,389.2 800.5,388.6 801.0,388.1 801.5,389.8 802.0,392.0 802.5,394.3 803.0,395.5 803.5,396.7 804.0,397.9 804.5,402.0 805.0,406.1 805.5,409.9 806.0,413.3 806.5,416.8 807.0,422.5 807.5,428.3 808.0,429.7 808.5,430.2 809.0,430.6 809.5,431.0 810.0,431.3 810.5,431.5 811.0,431.7 811.5,431.9 812.0,432.2 812.5,432.8 813.0,433.3 813.5,433.9 814.0,434.5 814.5,434.6 815.0,434.4 815.5,434.2 816.0,434.0 816.5,433.8 817.0,433.6 817.5,433.4 818.0,433.2 818.5,433.0 819.0,433.6 819.5,434.9 820.0,436.1 820.5,437.4 821.0,437.6 821.5,437.8 822.0,438.0 822.5,438.2 823.0,437.8 823.5,437.0 824.0,436.2 824.5,435.4 825.0,434.6 825.5,434.4 826.0,434.2 826.5,434.0 827.0,433.8 827.5,435.4 828.0,438.3 828.5,441.2 829.0,443.0 829.5,444.5 830.0,446.0 830.5,447.4 831.0,448.4 831.5,449.4 832.0,450.5 832.5,451.5 833.0,450.5 833.5,449.1 834.0,447.6 834.5,446.2 835.0,445.4 835.5,447.5 836.0,449.6 836.5,451.8 837.0,452.6 837.5,452.6 838.0,452.6 838.5,452.6 839.0,452.6 839.5,452.8 840.0,453.0 840.5,453.2 841.0,453.4 841.5,453.7 842.0,454.0 842.5,454.4 843.0,454.7 843.5,455.0 844.0,455.8 844.5,458.3 845.0,460.7 845.5,463.2 846.0,464.3 846.5,464.6 847.0,464.9 847.5,465.1 848.0,464.3 848.5,463.6 849.0,462.8 849.5,462.2 850.0,461.6 850.5,461.0 851.0,460.4 851.5,459.8 852.0,460.7 852.5,461.9 853.0,463.2 853.5,463.6 854.0,460.5 854.5,457.4 855.0,455.9 855.5,455.4 856.0,454.9 856.5,454.4 857.0,453.1 857.5,451.9 858.0,450.6 858.5,449.6 859.0,448.8 859.5,448.1 860.0,447.4 860.5,445.6 861.0,443.6 861.5,441.6 862.0,439.9 862.5,439.5 863.0,439.1 863.5,438.7 864.0,438.4 864.5,438.0 865.0,437.7 865.5,437.3 866.0,437.0 866.5,436.5 867.0,435.3 867.5,434.2 868.0,433.0 868.5,431.9 869.0,431.5 869.5,431.1 870.0,430.8 870.5,430.4 871.0,429.9 871.5,429.2 872.0,428.5 872.5,427.7 873.0,427.2 873.5,426.7 874.0,426.3 874.5,425.9 875.0,426.4 875.5,426.9 876.0,427.5 876.5,428.0 877.0,428.8 877.5,430.1 878.0,431.3 878.5,432.5 879.0,433.3 879.5,433.9 880.0,434.5 880.5,435.1 881.0,436.0 881.5,437.1 882.0,438.2 882.5,439.4 883.0,439.3 883.5,438.9 884.0,438.5 884.5,438.5 885.0,439.7 885.5,440.9 886.0,442.2 886.5,443.1 887.0,443.7 887.5,444.4 888.0,445.0 888.5,445.6 889.0,446.2 889.5,446.8 890.0,447.4 890.5,448.0 891.0,448.6 891.5,449.2 892.0,449.9 892.5,450.5 893.0,451.1 893.5,451.5 894.0,451.9 894.5,452.4 895.0,453.4 895.5,455.2 896.0,457.1 896.5,457.2 897.0,457.4 897.5,457.5 898.0,457.7 898.5,457.8 899.0,457.5 899.5,457.0 900.0,456.4 900.5,455.8 901.0,455.2 901.5,454.5 902.0,453.8 902.5,453.2 903.0,453.4 903.5,454.4 904.0,455.3 904.5,456.2 905.0,456.7 905.5,457.1 906.0,457.6 906.5,458.0 907.0,458.2 907.5,457.9 908.0,457.7 908.5,457.5 909.0,457.2 909.5,457.2 910.0,457.3 910.5,457.4 911.0,457.5 911.5,457.4 912.0,456.8 912.5,456.2 913.0,455.6 913.5,455.0 914.0,454.4 914.5,454.6 915.0,454.9 915.5,455.2 916.0,455.2 916.5,455.0 917.0,454.9 917.5,454.7 918.0,454.5 918.5,455.5 919.0,457.3 919.5,459.2 920.0,461.2 920.5,463.2 921.0,465.2 921.5,465.3 922.0,464.0 922.5,462.8 923.0,461.5 923.5,461.4 924.0,461.3 924.5,462.0 925.0,464.0 925.5,466.1 926.0,467.2 926.5,467.7 927.0,468.2 927.5,468.7 928.0,467.4 928.5,466.2 929.0,464.9 929.5,463.7 930.0,462.4 930.5,461.2 931.0,460.0 931.5,458.1 932.0,456.1 932.5,454.2 933.0,452.4 933.5,451.7 934.0,451.0 934.5,450.2 935.0,450.1 935.5,450.6 936.0,451.0 936.5,451.4 937.0,451.5 937.5,450.8 938.0,450.0 938.5,449.2 939.0,448.4 939.5,447.8 940.0,447.3 940.5,446.8 941.0,446.3 941.5,447.1 942.0,447.8 942.5,448.6 943.0,449.5 943.5,450.8 944.0,452.0 944.5,453.2 945.0,454.0 945.5,454.6 946.0,455.1 946.5,455.7 947.0,456.4 947.5,457.2 948.0,457.9 948.5,458.7 949.0,459.5 949.5,461.7 950.0,464.2 950.5,464.0 951.0,463.8 951.5,463.6 952.0,463.4 952.5,463.5 953.0,463.9 953.5,464.3 954.0,464.7 954.5,465.1 955.0,466.6 955.5,468.1 956.0,469.6 956.5,471.2 957.0,473.0 957.5,474.7 958.0,476.4 958.5,477.8 959.0,479.1 959.5,480.3 960.0,481.4 960.5,481.9 961.0,482.4 961.5,482.9 962.0,483.0 962.5,482.8 963.0,482.7 963.5,482.5 964.0,482.3 964.5,482.2 965.0,481.9 965.5,481.7 966.0,481.4 966.5,481.2 967.0,480.9 967.5,481.2 968.0,481.5 968.5,481.9 969.0,482.2 969.5,482.5 970.0,482.7 970.5,482.8 971.0,482.9 971.5,483.1 972.0,483.3 972.5,483.5 973.0,483.7 973.5,483.9 974.0,483.7 974.5,483.2 975.0,482.7 975.5,482.2 976.0,485.2 976.5,488.2 977.0,491.2 977.5,492.4 978.0,493.7 978.5,494.9 979.0,495.6 979.5,496.3 980.0,497.1 980.5,496.7 981.0,495.4 981.5,494.2 982.0,492.9 982.5,491.7 983.0,490.5 983.5,489.2 984.0,488.3 984.5,487.9 985.0,487.5 985.5,487.1 986.0,486.7 986.5,487.1 987.0,487.6 987.5,488.0 988.0,488.4 988.5,487.1 989.0,485.4 989.5,483.6 990.0,482.0 990.5,481.1 991.0,480.2 991.5,479.3 992.0,479.6 992.5,480.8 993.0,481.9 993.5,483.1 994.0,484.1 994.5,485.1 995.0,486.1 995.5,487.6 996.0,490.0 996.5,492.4 997.0,494.3 997.5,495.6 998.0,496.9 998.5,495.8 999.0,493.0 999.5,490.3 1000.0,487.6 1000.5,483.6 1001.0,479.6 1001.5,475.6 1002.0,472.2 1002.5,469.7 1003.0,467.2 1003.5,464.7 1004.0,462.0 1004.5,459.2 1005.0,456.7 1005.5,455.2 1006.0,453.7 1006.5,455.6 1007.0,458.3 1007.5,461.0 1008.0,463.8 1008.5,466.7 1009.0,469.6 1009.5,472.1 1010.0,474.6 1010.5,477.1 1011.0,479.2 1011.5,480.7 1012.0,482.2 1012.5,483.7 1013.0,484.2 1013.5,484.4 1014.0,484.6 1014.5,484.8 1015.0,485.3 1015.5,486.1 1016.0,486.8 1016.5,487.6 1017.0,490.6 1017.5,493.5 1018.0,496.5 1018.5,499.0 1019.0,501.5 1019.5,504.0 1020.0,506.0 1020.5,507.1 1021.0,508.2 1021.5,505.1 1022.0,502.0 1022.5,498.8 1023.0,495.6 1023.5,492.5 1024.0,490.5 1024.5,489.4 1025.0,488.3 1025.5,487.2 1026.0,486.8 1026.5,486.4 1027.0,486.0 1027.5,485.6 1028.0,486.1 1028.5,487.2 1029.0,488.3 1029.5,489.4 1030.0,489.6 1030.5,489.9 1031.0,490.2 1031.5,490.0 1032.0,489.2 1032.5,488.5 1033.0,487.7 1033.5,489.1 1034.0,491.0 1034.5,492.9 1035.0,494.7 1035.5,496.5 1036.0,498.3 1036.5,500.1 1037.0,501.8 1037.5,503.6 1038.0,505.0 1038.5,506.0 1039.0,507.0 1039.5,508.0 1040.0,510.3 1040.5,512.9 1041.0,515.1 1041.5,516.4 1042.0,517.8 1042.5,517.3 1043.0,516.4 1043.5,515.4 1044.0,514.4 1044.5,513.4 1045.0,512.4 1045.5,511.4 1046.0,510.5 1046.5,509.6 1047.0,507.9 1047.5,504.9 1048.0,501.9 1048.5,497.8 1049.0,493.7 1049.5,490.0 1050.0,487.1 1050.5,484.3 1051.0,482.4 1051.5,481.1 1052.0,481.4 1052.5,484.0 1053.0,486.6 1053.5,489.0 1054.0,491.4 1054.5,493.8 1055.0,495.5 1055.5,496.8 1056.0,498.0 1056.5,497.3 1057.0,496.1 1057.5,494.9 1058.0,493.9 1058.5,492.9 1059.0,495.9 1059.5,498.9 1060.0,501.9 1060.5,504.9 1061.0,507.9 1061.5,511.8 1062.0,516.3 1062.5,520.3 1063.0,522.4 1063.5,524.5 1064.0,526.3 1064.5,527.9 1065.0,529.5 1065.5,527.0 1066.0,523.5 1066.5,523.5 1067.0,523.5 1067.5,523.5 1068.0,524.1 1068.5,525.4 1069.0,526.8 1069.5,525.9 1070.0,524.4 1070.5,522.9 1071.0,521.5 1071.5,520.5 1072.0,519.5 1072.5,518.5 1073.0,518.5 1073.5,519.1 1074.0,519.8 1074.5,520.7 1075.0,521.7 1075.5,522.7 1076.0,524.5 1076.5,529.4 1077.0,534.3 1077.5,540.0 1078.0,545.8 1078.5,550.5 1079.0,555.0 1079.5,549.0 1080.0,543.4 1080.5,549.9 1081.0,556.4 1081.5,562.9 1082.0,557.8 1082.5,552.7 1083.0,547.6 1083.5,542.5 1084.0,542.3 1084.5,545.4 1085.0,548.4 1085.5,550.5 1086.0,552.1 1086.5,553.7 1087.0,555.3 1087.5,554.4 1088.0,550.1 1088.5,545.7 1089.0,541.3 1089.5,536.4 1090.0,531.5 1090.5,526.7 1091.0,524.0 1091.5,522.8 1092.0,521.6 1092.5,520.4 1093.0,518.2 1093.5,514.5 1094.0,510.8 1094.5,507.0 1095.0,504.4 1095.5,503.4 1096.0,502.4 1096.5,501.4 1097.0,500.4 1097.5,499.5 1098.0,498.9 1098.5,498.2 1099.0,497.6 1099.5,496.9 1100.0,494.5 1100.5,489.7 1101.0,484.8 1101.5,479.9 1102.0,475.4 1102.5,471.0 1103.0,470.1 1103.5,474.5 1104.0,479.0 1104.5,485.2 1105.0,491.7 1105.5,498.3 1106.0,502.2 1106.5,505.1 1107.0,508.0 1107.5,509.5 1108.0,508.7 1108.5,507.9 1109.0,507.0 1109.5,507.0 1110.0,509.9 1110.5,512.9 1111.0,515.8 1111.5,519.7 1112.0,523.9 1112.5,528.0 1113.0,529.9 1113.5,530.3 1114.0,530.7 1114.5,531.1 1115.0,532.8 1115.5,535.2 1116.0,537.6 1116.5,540.3 1117.0,543.6 1117.5,546.9 1118.0,550.2 1118.5,552.5 1119.0,550.8 1119.5,549.0 1120.0,547.2 1120.5,545.4 1121.0,544.9 1121.5,544.4 1122.0,543.9 1122.5,543.4 1123.0,542.9 1123.5,540.0 1124.0,537.1 1124.5,534.2 1125.0,531.3 1125.5,528.9 1126.0,526.4 1126.5,524.0 1127.0,525.3 1127.5,529.2 1128.0,533.0 1128.5,538.7 1129.0,544.5 1129.5,543.5 1130.0,535.2 1130.5,528.7 1131.0,524.6 1131.5,526.3 1132.0,528.0 1132.5,529.7 1133.0,529.2 1133.5,528.8 1134.0,528.3 1134.5,529.9 1135.0,534.8 1135.5,539.6 1136.0,546.1 1136.5,554.4 1137.0,559.8 1137.5,562.1 1138.0,564.5 1138.5,563.2 1139.0,561.9 1139.5,560.7 1140.0,557.1 1140.5,552.9 1141.0,548.8 1141.5,544.6 1142.0,547.6 1142.5,552.4 1143.0,556.4 1143.5,557.4 1144.0,558.3 1144.5,559.3 1145.0,556.8 1145.5,553.4 1146.0,549.9 1146.5,547.0 1147.0,544.7 1147.5,542.4 1148.0,541.2 1148.5,544.8 1149.0,548.4 1149.5,552.0 1150.0,559.0 1150.5,570.0 1151.0,581.5 1151.5,592.0 1152.0,589.0 1152.5,586.0 1153.0,583.0 1153.5,580.3 1154.0,577.6 1154.5,583.8 1155.0,596.0 1155.0,674.8"/><clipPath id="fc"><use href="#pe"/></clipPath></defs>
<use href="#pe" fill="#38745e"/>
<polygon points="27.0,674.8 27.0,674.8 27.5,377.0 28.0,370.5 28.5,366.8 29.0,363.2 29.5,341.8 30.0,316.5 30.5,292.8 31.0,273.3 31.5,263.2 32.0,256.5 32.5,250.0 33.0,249.3 33.5,248.7 34.0,248.0 34.5,253.8 35.0,259.7 35.5,269.2 36.0,281.2 36.5,282.6 37.0,276.9 37.5,271.1 38.0,267.5 38.5,264.5 39.0,262.7 39.5,266.4 40.0,270.0 40.5,273.2 41.0,276.4 41.5,271.9 42.0,265.6 42.5,259.3 43.0,254.0 43.5,249.0 44.0,246.9 44.5,254.8 45.0,265.8 45.5,276.8 46.0,269.3 46.5,257.2 47.0,247.5 47.5,241.4 48.0,235.2 48.5,239.3 49.0,245.8 49.5,252.5 50.0,259.8 50.5,270.0 51.0,264.0 51.5,258.0 52.0,252.0 52.5,247.6 53.0,243.1 53.5,238.7 54.0,234.4 54.5,230.5 55.0,226.6 55.5,232.2 56.0,237.8 56.5,241.9 57.0,245.2 57.5,248.0 58.0,250.5 58.5,253.1 59.0,255.6 59.5,259.5 60.0,269.2 60.5,281.0 61.0,296.0 61.5,299.9 62.0,287.1 62.5,277.9 63.0,271.0 63.5,280.5 64.0,290.0 64.5,306.5 65.0,323.0 65.5,296.5 66.0,270.0 66.5,257.8 67.0,250.7 67.5,264.2 68.0,277.6 68.5,290.6 69.0,303.6 69.5,316.6 70.0,323.8 70.5,307.6 71.0,291.5 71.5,281.0 72.0,274.3 72.5,271.2 73.0,268.9 73.5,264.2 74.0,257.8 74.5,257.8 75.0,267.4 75.5,278.4 76.0,295.2 76.5,312.1 77.0,329.0 77.5,316.8 78.0,304.6 78.5,292.3 79.0,281.3 79.5,272.1 80.0,262.8 80.5,257.9 81.0,270.2 81.5,282.6 82.0,295.3 82.5,308.5 83.0,321.7 83.5,319.1 84.0,306.0 84.5,292.9 85.0,282.5 85.5,276.2 86.0,270.0 86.5,265.8 87.0,261.7 87.5,257.5 88.0,252.8 88.5,247.2 89.0,241.6 89.5,236.1 90.0,230.5 90.5,241.0 91.0,251.5 91.5,262.0 92.0,283.8 92.5,305.6 93.0,319.1 93.5,330.6 94.0,342.0 94.5,311.8 95.0,281.5 95.5,280.8 96.0,280.2 96.5,279.5 97.0,284.4 97.5,289.2 98.0,295.6 98.5,308.1 99.0,320.5 99.5,327.0 100.0,326.2 100.5,324.9 101.0,323.6 101.5,321.0 102.0,317.4 102.5,310.3 103.0,295.7 103.5,284.1 104.0,274.4 104.5,267.9 105.0,262.5 105.5,261.1 106.0,264.5 106.5,272.4 107.0,282.9 107.5,299.4 108.0,318.4 108.5,332.3 109.0,345.1 109.5,355.5 110.0,354.6 110.5,350.7 111.0,358.7 111.5,351.9 112.0,340.8 112.5,330.1 113.0,320.9 113.5,316.7 114.0,318.5 114.5,316.7 115.0,318.1 115.5,318.8 116.0,315.4 116.5,311.9 117.0,307.1 117.5,301.5 118.0,296.6 118.5,295.8 119.0,298.9 119.5,303.4 120.0,309.0 120.5,314.8 121.0,318.0 121.5,318.7 122.0,319.0 122.5,320.1 123.0,322.3 123.5,325.0 124.0,329.9 124.5,339.0 125.0,336.8 125.5,332.5 126.0,343.4 126.5,332.4 127.0,322.8 127.5,315.9 128.0,309.0 128.5,302.3 129.0,295.8 129.5,289.8 130.0,283.9 130.5,280.1 131.0,284.5 131.5,290.2 132.0,296.7 132.5,304.7 133.0,313.6 133.5,322.9 134.0,332.5 134.5,342.2 135.0,351.3 135.5,360.7 136.0,358.1 136.5,354.8 137.0,364.7 137.5,353.7 138.0,342.7 138.5,331.7 139.0,320.7 139.5,309.0 140.0,297.8 140.5,292.4 141.0,286.9 141.5,281.5 142.0,278.2 142.5,280.6 143.0,284.7 143.5,289.5 144.0,294.7 144.5,300.1 145.0,305.7 145.5,309.4 146.0,305.5 146.5,308.0 147.0,310.3 147.5,302.3 148.0,296.8 148.5,293.2 149.0,296.9 149.5,301.5 150.0,307.4 150.5,314.0 151.0,320.8 151.5,328.6 152.0,337.4 152.5,346.3 153.0,354.0 153.5,352.5 154.0,349.9 154.5,356.7 155.0,349.6 155.5,338.0 156.0,332.2 156.5,336.4 157.0,339.3 157.5,341.3 158.0,341.5 158.5,340.1 159.0,342.2 159.5,341.1 160.0,335.3 160.5,329.5 161.0,324.8 161.5,321.8 162.0,318.7 162.5,316.1 163.0,315.0 163.5,315.9 164.0,318.3 164.5,320.9 165.0,323.9 165.5,326.9 166.0,330.0 166.5,333.5 167.0,337.6 167.5,341.7 168.0,343.8 168.5,344.5 169.0,345.1 169.5,345.2 170.0,344.9 170.5,345.4 171.0,347.1 171.5,352.2 172.0,356.8 172.5,356.7 173.0,354.4 173.5,358.4 174.0,355.6 174.5,352.9 175.0,348.6 175.5,342.1 176.0,335.4 176.5,328.2 177.0,320.9 177.5,313.8 178.0,307.3 178.5,300.8 179.0,294.4 179.5,288.3 180.0,284.0 180.5,279.7 181.0,275.4 181.5,272.9 182.0,271.9 182.5,273.0 183.0,276.7 183.5,282.8 184.0,289.2 184.5,295.7 185.0,302.4 185.5,309.3 186.0,315.9 186.5,322.0 187.0,328.1 187.5,334.4 188.0,340.8 188.5,342.0 189.0,339.6 189.5,343.4 190.0,341.0 190.5,338.6 191.0,339.5 191.5,339.7 192.0,338.9 192.5,339.9 193.0,339.5 193.5,337.0 194.0,334.5 194.5,332.0 195.0,329.5 195.5,324.8 196.0,317.9 196.5,311.4 197.0,305.0 197.5,299.1 198.0,293.1 198.5,290.1 199.0,287.0 199.5,284.7 200.0,288.5 200.5,292.4 201.0,296.3 201.5,300.4 202.0,304.3 202.5,308.0 203.0,310.7 203.5,308.6 204.0,309.5 204.5,311.5 205.0,306.7 205.5,301.8 206.0,297.5 206.5,294.0 207.0,290.4 207.5,288.0 208.0,287.2 208.5,286.6 209.0,287.9 209.5,289.9 210.0,293.3 210.5,297.5 211.0,302.3 211.5,308.0 212.0,313.9 212.5,319.2 213.0,324.1 213.5,328.9 214.0,332.5 214.5,334.8 215.0,330.8 215.5,333.5 216.0,335.7 216.5,324.7 217.0,316.3 217.5,311.8 218.0,307.3 218.5,308.4 219.0,310.8 219.5,313.6 220.0,317.8 220.5,323.7 221.0,331.6 221.5,340.5 222.0,349.9 222.5,359.6 223.0,364.8 223.5,357.3 224.0,363.5 224.5,365.8 225.0,351.6 225.5,337.5 226.0,327.7 226.5,320.8 227.0,313.9 227.5,310.7 228.0,308.4 228.5,306.2 229.0,305.8 229.5,306.0 230.0,307.1 230.5,306.3 231.0,305.4 231.5,304.6 232.0,303.7 232.5,302.9 233.0,302.0 233.5,303.8 234.0,307.3 234.5,310.8 235.0,314.3 235.5,319.8 236.0,325.3 236.5,330.8 237.0,335.4 237.5,338.6 238.0,341.9 238.5,345.2 239.0,346.6 239.5,347.6 240.0,348.6 240.5,349.7 241.0,351.2 241.5,352.6 242.0,354.1 242.5,356.5 243.0,359.5 243.5,362.5 244.0,365.5 244.5,368.4 245.0,371.2 245.5,374.1 246.0,377.0 246.5,379.2 247.0,381.0 247.5,382.9 248.0,384.7 248.5,386.5 249.0,385.8 249.5,374.8 250.0,363.8 250.5,357.1 251.0,351.2 251.5,345.2 252.0,341.5 252.5,338.3 253.0,335.1 253.5,332.0 254.0,328.8 254.5,326.6 255.0,325.9 255.5,325.1 256.0,324.4 256.5,325.7 257.0,327.6 257.5,329.4 258.0,331.3 258.5,333.2 259.0,335.1 259.5,337.0 260.0,339.1 260.5,341.4 261.0,343.8 261.5,346.1 262.0,348.4 262.5,350.9 263.0,353.9 263.5,356.8 264.0,359.8 264.5,362.8 265.0,366.1 265.5,369.3 266.0,367.1 266.5,363.4 267.0,359.0 267.5,354.1 268.0,349.8 268.5,346.2 269.0,344.6 269.5,346.2 270.0,347.8 270.5,349.4 271.0,351.7 271.5,354.0 272.0,356.3 272.5,358.7 273.0,361.0 273.5,363.3 274.0,365.6 274.5,368.0 275.0,370.3 275.5,372.6 276.0,375.3 276.5,379.3 277.0,383.3 277.5,387.3 278.0,388.0 278.5,386.5 279.0,385.0 279.5,383.5 280.0,382.5 280.5,381.5 281.0,380.5 281.5,378.7 282.0,375.7 282.5,372.7 283.0,369.7 283.5,366.7 284.0,363.7 284.5,360.7 285.0,357.8 285.5,355.6 286.0,353.4 286.5,355.2 287.0,358.1 287.5,361.9 288.0,366.4 288.5,370.9 289.0,374.9 289.5,378.0 290.0,377.3 290.5,376.7 291.0,376.0 291.5,375.3 292.0,374.6 292.5,372.8 293.0,370.7 293.5,368.6 294.0,367.2 294.5,367.1 295.0,366.9 295.5,366.7 296.0,366.6 296.5,366.4 297.0,366.6 297.5,366.7 298.0,366.9 298.5,367.1 299.0,367.2 299.5,367.7 300.0,368.4 300.5,369.0 301.0,369.7 301.5,370.4 302.0,371.2 302.5,372.5 303.0,373.8 303.5,375.2 304.0,376.5 304.5,377.8 305.0,379.4 305.5,381.1 306.0,382.8 306.5,384.4 307.0,386.1 307.5,388.3 308.0,391.3 308.5,394.3 309.0,397.3 309.5,396.9 310.0,395.7 310.5,394.5 311.0,389.5 311.5,383.5 312.0,379.1 312.5,377.0 313.0,374.9 313.5,377.1 314.0,380.3 314.5,383.5 315.0,386.0 315.5,388.5 316.0,391.0 316.5,393.1 317.0,394.6 317.5,396.1 318.0,397.6 318.5,402.9 319.0,409.1 319.5,411.9 320.0,403.6 320.5,396.8 321.0,390.3 321.5,384.8 322.0,379.3 322.5,373.8 323.0,369.9 323.5,366.4 324.0,362.9 324.5,361.0 325.0,365.3 325.5,364.7 326.0,364.1 326.5,363.5 327.0,362.8 327.5,360.3 328.0,356.6 328.5,352.9 329.0,349.1 329.5,347.5 330.0,346.0 330.5,344.4 331.0,342.8 331.5,342.3 332.0,343.3 332.5,344.2 333.0,345.2 333.5,346.2 334.0,347.6 334.5,349.1 335.0,350.6 335.5,352.1 336.0,353.8 336.5,355.4 337.0,357.0 337.5,358.7 338.0,360.0 338.5,361.3 339.0,362.6 339.5,363.9 340.0,366.5 340.5,370.0 341.0,373.4 341.5,376.9 342.0,378.9 342.5,380.9 343.0,382.9 343.5,384.8 344.0,386.6 344.5,388.4 345.0,390.9 345.5,394.4 346.0,397.9 346.5,401.4 347.0,401.8 347.5,401.5 348.0,401.2 348.5,400.8 349.0,400.5 349.5,400.1 350.0,399.8 350.5,399.4 351.0,399.0 351.5,398.6 352.0,398.8 352.5,399.2 353.0,399.6 353.5,400.1 354.0,401.1 354.5,403.0 355.0,404.9 355.5,402.0 356.0,395.7 356.5,389.5 357.0,387.0 357.5,384.5 358.0,382.0 358.5,379.6 359.0,377.2 359.5,374.9 360.0,372.6 360.5,370.2 361.0,367.9 361.5,365.4 362.0,362.8 362.5,360.3 363.0,357.7 363.5,356.2 364.0,354.9 364.5,353.7 365.0,352.8 365.5,353.3 366.0,353.8 366.5,354.3 367.0,355.7 367.5,357.8 368.0,359.0 368.5,359.0 369.0,359.0 369.5,359.0 370.0,360.7 370.5,362.7 371.0,364.8 371.5,366.8 372.0,368.7 372.5,370.7 373.0,372.4 373.5,373.9 374.0,375.4 374.5,376.9 375.0,378.9 375.5,380.9 376.0,382.9 376.5,384.7 377.0,386.2 377.5,387.7 378.0,389.2 378.5,392.5 379.0,396.2 379.5,394.1 380.0,385.8 380.5,379.8 381.0,373.1 381.5,366.9 382.0,363.2 382.5,361.2 383.0,359.2 383.5,357.2 384.0,357.7 384.5,358.2 385.0,358.7 385.5,359.6 386.0,361.1 386.5,362.6 387.0,364.1 387.5,367.4 388.0,371.1 388.5,373.5 389.0,374.1 389.5,374.7 390.0,375.3 390.5,375.9 391.0,376.1 391.5,376.3 392.0,376.5 392.5,376.6 393.0,376.8 393.5,377.1 394.0,377.6 394.5,378.1 395.0,378.6 395.5,379.1 396.0,379.6 396.5,381.4 397.0,383.1 397.5,384.8 398.0,386.7 398.5,388.7 399.0,390.7 399.5,392.7 400.0,395.1 400.5,397.6 401.0,400.1 401.5,401.4 402.0,397.9 402.5,394.5 403.0,391.9 403.5,388.0 404.0,382.4 404.5,378.5 405.0,376.1 405.5,373.6 406.0,371.2 406.5,369.2 407.0,368.0 407.5,366.8 408.0,365.5 408.5,366.5 409.0,368.0 409.5,369.4 410.0,370.9 410.5,372.2 411.0,373.6 411.5,375.0 412.0,376.4 412.5,377.3 413.0,378.1 413.5,378.8 414.0,379.6 414.5,380.3 415.0,381.9 415.5,383.6 416.0,385.3 416.5,387.0 417.0,389.5 417.5,392.5 418.0,395.5 418.5,398.5 419.0,401.5 419.5,403.6 420.0,402.1 420.5,400.6 421.0,399.1 421.5,397.6 422.0,396.1 422.5,394.6 423.0,393.1 423.5,395.6 424.0,398.1 424.5,400.6 425.0,399.6 425.5,393.4 426.0,387.1 426.5,384.3 427.0,382.3 427.5,380.3 428.0,378.6 428.5,378.1 429.0,377.6 429.5,377.1 430.0,377.7 430.5,379.0 431.0,380.2 431.5,380.1 432.0,379.6 432.5,379.1 433.0,379.1 433.5,380.9 434.0,382.7 434.5,384.3 435.0,385.3 435.5,386.3 436.0,387.3 436.5,388.2 437.0,389.1 437.5,389.9 438.0,390.8 438.5,391.4 439.0,391.8 439.5,392.1 440.0,392.4 440.5,392.8 441.0,393.1 441.5,391.6 442.0,390.1 442.5,388.6 443.0,387.1 443.5,385.5 444.0,383.9 444.5,382.4 445.0,380.8 445.5,378.2 446.0,376.3 446.5,373.3 447.0,370.4 447.5,367.4 448.0,362.7 448.5,356.9 449.0,351.8 449.5,345.9 450.0,339.7 450.5,339.7 451.0,339.7 451.5,339.7 452.0,339.7 452.5,341.4 453.0,344.3 453.5,347.2 454.0,353.7 454.5,364.6 455.0,377.4 455.5,385.3 456.0,387.0 456.5,388.6 457.0,390.2 457.5,391.7 458.0,393.0 458.5,394.4 459.0,395.7 459.5,397.0 460.0,398.4 460.5,400.1 461.0,401.8 461.5,403.4 462.0,405.1 462.5,406.8 463.0,408.0 463.5,409.2 464.0,410.4 464.5,411.5 465.0,412.7 465.5,413.4 466.0,413.4 466.5,413.4 467.0,413.4 467.5,413.4 468.0,413.4 468.5,415.7 469.0,417.9 469.5,419.3 470.0,417.3 470.5,415.3 471.0,413.3 471.5,411.8 472.0,410.6 472.5,409.5 473.0,408.3 473.5,407.2 474.0,406.0 474.5,404.5 475.0,402.5 475.5,400.5 476.0,398.5 476.5,396.5 477.0,394.5 477.5,392.5 478.0,390.5 478.5,388.5 479.0,386.5 479.5,384.5 480.0,382.5 480.5,380.6 481.0,378.6 481.5,376.7 482.0,374.7 482.5,374.2 483.0,373.7 483.5,373.2 484.0,373.4 484.5,374.6 485.0,375.9 485.5,377.1 486.0,376.9 486.5,376.3 487.0,375.7 487.5,375.1 488.0,374.4 488.5,373.5 489.0,372.7 489.5,371.9 490.0,371.1 490.5,370.9 491.0,370.6 491.5,370.4 492.0,371.3 492.5,373.1 493.0,374.8 493.5,376.5 494.0,379.5 494.5,382.5 495.0,385.5 495.5,384.2 496.0,382.9 496.5,381.7 497.0,380.7 497.5,379.8 498.0,379.9 498.5,381.8 499.0,383.6 499.5,385.5 500.0,387.5 500.5,389.5 501.0,391.5 501.5,393.7 502.0,396.2 502.5,398.7 503.0,401.2 503.5,401.3 504.0,400.8 504.5,400.3 505.0,399.8 505.5,399.3 506.0,398.8 506.5,398.3 507.0,398.2 507.5,398.5 508.0,398.8 508.5,399.0 509.0,397.8 509.5,396.5 510.0,395.2 510.5,387.4 511.0,377.7 511.5,371.2 512.0,366.7 512.5,362.2 513.0,357.7 513.5,353.9 514.0,351.1 514.5,348.4 515.0,345.7 515.5,344.1 516.0,342.9 516.5,341.6 517.0,340.3 517.5,338.6 518.0,337.0 518.5,341.5 519.0,346.0 519.5,352.5 520.0,360.3 520.5,370.3 521.0,382.7 521.5,394.1 522.0,396.9 522.5,390.9 523.0,387.6 523.5,388.3 524.0,389.0 524.5,390.6 525.0,392.6 525.5,394.5 526.0,396.0 526.5,397.5 527.0,399.0 527.5,400.3 528.0,401.3 528.5,402.3 529.0,403.3 529.5,403.5 530.0,403.5 530.5,403.5 531.0,403.5 531.5,403.3 532.0,402.8 532.5,402.3 533.0,401.8 533.5,401.1 534.0,400.4 534.5,399.6 535.0,398.8 535.5,398.1 536.0,397.4 536.5,396.6 537.0,396.6 537.5,397.1 538.0,397.6 538.5,398.1 539.0,399.7 539.5,401.3 540.0,402.3 540.5,401.1 541.0,399.9 541.5,398.6 542.0,397.8 542.5,397.3 543.0,396.8 543.5,396.3 544.0,398.1 544.5,399.9 545.0,401.7 545.5,405.4 546.0,409.2 546.5,410.8 547.0,411.0 547.5,411.1 548.0,411.3 548.5,411.5 549.0,411.6 549.5,411.4 550.0,411.2 550.5,411.1 551.0,410.9 551.5,410.7 552.0,410.1 552.5,409.4 553.0,408.6 553.5,407.9 554.0,407.1 554.5,402.6 555.0,398.1 555.5,394.2 556.0,390.8 556.5,387.3 557.0,385.4 557.5,383.4 558.0,381.8 558.5,381.2 559.0,380.5 559.5,379.9 560.0,379.3 560.5,377.8 561.0,376.0 561.5,374.3 562.0,372.8 562.5,372.2 563.0,371.6 563.5,371.8 564.0,373.3 564.5,374.7 565.0,376.2 565.5,377.0 566.0,377.6 566.5,378.2 567.0,378.8 567.5,379.3 568.0,379.7 568.5,380.0 569.0,380.3 569.5,380.6 570.0,380.9 570.5,381.5 571.0,382.1 571.5,382.7 572.0,383.3 572.5,383.9 573.0,384.4 573.5,384.9 574.0,385.4 574.5,385.1 575.0,384.7 575.5,386.0 576.0,387.2 576.5,388.5 577.0,389.8 577.5,391.2 578.0,392.6 578.5,394.1 579.0,395.5 579.5,397.1 580.0,398.6 580.5,400.2 581.0,401.8 581.5,403.3 582.0,404.8 582.5,406.3 583.0,407.8 583.5,407.8 584.0,407.4 584.5,407.0 585.0,406.6 585.5,406.4 586.0,406.8 586.5,407.2 587.0,407.6 587.5,408.0 588.0,409.3 588.5,410.8 589.0,412.3 589.5,413.7 590.0,414.7 590.5,414.7 591.0,413.2 591.5,411.7 592.0,410.2 592.5,408.7 593.0,407.2 593.5,405.7 594.0,404.4 594.5,403.9 595.0,403.4 595.5,402.9 596.0,403.6 596.5,405.1 597.0,406.6 597.5,408.1 598.0,409.1 598.5,410.1 599.0,411.1 599.5,411.5 600.0,411.0 600.5,410.5 601.0,410.0 601.5,410.7 602.0,411.7 602.5,412.7 603.0,413.7 603.5,414.4 604.0,415.1 604.5,413.4 605.0,411.0 605.5,408.6 606.0,403.5 606.5,396.1 607.0,386.2 607.5,379.7 608.0,375.2 608.5,374.2 609.0,373.2 609.5,372.2 610.0,371.8 610.5,371.4 611.0,371.1 611.5,370.7 612.0,370.3 612.5,369.8 613.0,369.3 613.5,368.8 614.0,368.8 614.5,369.0 615.0,369.2 615.5,369.5 616.0,372.0 616.5,377.1 617.0,392.4 617.5,404.7 618.0,416.1 618.5,419.9 619.0,418.6 619.5,417.4 620.0,416.7 620.5,416.2 621.0,415.7 621.5,415.4 622.0,415.9 622.5,416.4 623.0,416.9 623.5,416.5 624.0,415.5 624.5,414.5 625.0,413.5 625.5,411.5 626.0,409.5 626.5,407.5 627.0,405.5 627.5,403.5 628.0,401.5 628.5,399.5 629.0,398.1 629.5,396.9 630.0,395.7 630.5,394.4 631.0,393.4 631.5,392.8 632.0,392.2 632.5,391.5 633.0,390.9 633.5,390.5 634.0,390.2 634.5,389.8 635.0,389.4 635.5,388.3 636.0,386.1 636.5,383.9 637.0,381.6 637.5,378.2 638.0,374.4 638.5,372.1 639.0,371.9 639.5,371.7 640.0,371.5 640.5,371.3 641.0,370.7 641.5,370.0 642.0,369.2 642.5,368.3 643.0,366.8 643.5,365.3 644.0,363.8 644.5,363.1 645.0,362.8 645.5,362.6 646.0,362.3 646.5,362.8 647.0,363.3 647.5,363.8 648.0,364.4 648.5,365.2 649.0,365.9 649.5,366.6 650.0,367.2 650.5,367.7 651.0,368.2 651.5,368.7 652.0,369.2 652.5,369.7 653.0,370.2 653.5,370.8 654.0,371.6 654.5,372.3 655.0,373.1 655.5,374.8 656.0,376.6 656.5,380.9 657.0,387.4 657.5,395.5 658.0,403.0 658.5,409.2 659.0,415.5 659.5,416.9 660.0,415.0 660.5,412.9 661.0,410.2 661.5,407.4 662.0,405.1 662.5,403.1 663.0,401.1 663.5,399.1 664.0,397.8 664.5,396.5 665.0,395.9 665.5,397.7 666.0,399.5 666.5,401.7 667.0,405.4 667.5,409.1 668.0,412.1 668.5,414.9 669.0,417.3 669.5,418.0 670.0,418.8 670.5,419.6 671.0,420.4 671.5,420.4 672.0,419.8 672.5,419.2 673.0,418.7 673.5,418.1 674.0,417.4 674.5,416.6 675.0,415.9 675.5,415.2 676.0,414.9 676.5,414.5 677.0,416.3 677.5,418.8 678.0,421.1 678.5,423.0 679.0,424.9 679.5,426.5 680.0,427.4 680.5,428.3 681.0,428.3 681.5,427.0 682.0,425.8 682.5,424.6 683.0,422.9 683.5,421.2 684.0,419.5 684.5,417.8 685.0,416.1 685.5,414.5 686.0,412.8 686.5,411.2 687.0,409.7 687.5,408.7 688.0,407.7 688.5,406.8 689.0,405.8 689.5,404.9 690.0,404.1 690.5,403.4 691.0,402.6 691.5,401.8 692.0,402.6 692.5,403.3 693.0,404.1 693.5,406.6 694.0,411.8 694.5,417.0 695.0,417.6 695.5,417.1 696.0,416.6 696.5,416.1 697.0,415.5 697.5,414.9 698.0,414.3 698.5,413.7 699.0,413.6 699.5,413.9 700.0,414.1 700.5,414.3 701.0,414.5 701.5,414.7 702.0,414.9 702.5,415.5 703.0,416.3 703.5,417.0 704.0,417.8 704.5,418.6 705.0,419.4 705.5,420.3 706.0,421.1 706.5,421.9 707.0,422.8 707.5,423.7 708.0,424.7 708.5,425.8 709.0,426.8 709.5,427.3 710.0,425.8 710.5,424.3 711.0,422.8 711.5,422.0 712.0,421.6 712.5,421.2 713.0,420.8 713.5,420.4 714.0,419.8 714.5,419.2 715.0,418.6 715.5,418.1 716.0,417.4 716.5,416.6 717.0,415.7 717.5,414.9 718.0,414.1 718.5,413.9 719.0,413.7 719.5,413.5 720.0,413.2 720.5,414.4 721.0,415.9 721.5,417.4 722.0,418.5 722.5,418.1 723.0,417.8 723.5,417.4 724.0,417.0 724.5,416.4 725.0,415.4 725.5,414.4 726.0,413.4 726.5,413.6 727.0,414.1 727.5,414.6 728.0,415.3 728.5,416.8 729.0,418.3 729.5,421.5 730.0,425.1 730.5,428.7 731.0,427.9 731.5,425.9 732.0,424.0 732.5,423.3 733.0,422.6 733.5,423.8 734.0,427.8 734.5,431.7 735.0,435.5 735.5,439.3 736.0,442.9 736.5,446.3 737.0,450.2 737.5,452.7 738.0,445.8 738.5,439.3 739.0,435.2 739.5,433.0 740.0,431.1 740.5,430.9 741.0,430.7 741.5,430.4 742.0,432.0 742.5,434.8 743.0,439.0 743.5,445.2 744.0,451.5 744.5,458.0 745.0,468.7 745.5,479.7 746.0,490.7 746.5,496.9 747.0,483.8 747.5,470.7 748.0,457.6 748.5,444.5 749.0,439.3 749.5,436.1 750.0,432.9 750.5,432.7 751.0,432.5 751.5,432.4 752.0,432.2 752.5,432.0 753.0,431.8 753.5,431.7 754.0,431.5 754.5,431.3 755.0,430.9 755.5,429.7 756.0,428.5 756.5,427.2 757.0,426.3 757.5,425.8 758.0,425.2 758.5,424.6 759.0,424.0 759.5,423.8 760.0,423.6 760.5,423.4 761.0,423.2 761.5,423.5 762.0,424.1 762.5,424.8 763.0,425.4 763.5,426.2 764.0,427.2 764.5,428.2 765.0,429.2 765.5,429.1 766.0,428.7 766.5,428.3 767.0,427.9 767.5,427.6 768.0,427.4 768.5,427.2 769.0,427.0 769.5,426.8 770.0,426.9 770.5,427.3 771.0,427.7 771.5,428.2 772.0,428.6 772.5,429.2 773.0,429.9 773.5,430.5 774.0,431.1 774.5,432.0 775.0,432.9 775.5,433.9 776.0,435.0 776.5,436.2 777.0,437.4 777.5,438.7 778.0,438.8 778.5,438.0 779.0,437.2 779.5,436.5 780.0,437.1 780.5,437.8 781.0,437.8 781.5,435.3 782.0,432.9 782.5,430.4 783.0,428.2 783.5,426.2 784.0,424.2 784.5,422.2 785.0,420.9 785.5,419.7 786.0,418.4 786.5,417.3 787.0,416.3 787.5,415.3 788.0,414.3 788.5,413.7 789.0,413.2 789.5,412.7 790.0,412.2 790.5,412.0 791.0,411.8 791.5,411.5 792.0,411.5 792.5,411.8 793.0,412.1 793.5,412.3 794.0,413.1 794.5,413.8 795.0,414.6 795.5,415.1 796.0,415.4 796.5,415.6 797.0,415.8 797.5,412.3 798.0,407.8 798.5,404.5 799.0,402.1 799.5,399.7 800.0,398.9 800.5,398.0 801.0,397.2 801.5,397.6 802.0,398.4 802.5,399.1 803.0,400.0 803.5,401.6 804.0,403.2 804.5,405.4 805.0,408.4 805.5,411.4 806.0,415.4 806.5,420.8 807.0,425.9 807.5,430.8 808.0,434.8 808.5,435.0 809.0,435.2 809.5,435.5 810.0,435.8 810.5,436.3 811.0,436.7 811.5,437.1 812.0,437.6 812.5,438.3 813.0,439.1 813.5,439.9 814.0,440.7 814.5,441.4 815.0,441.9 815.5,442.5 816.0,443.1 816.5,443.7 817.0,442.9 817.5,442.1 818.0,441.2 818.5,440.4 819.0,440.4 819.5,440.9 820.0,441.4 820.5,441.9 821.0,442.3 821.5,442.7 822.0,443.1 822.5,443.5 823.0,443.7 823.5,443.7 824.0,443.6 824.5,443.6 825.0,443.6 825.5,443.8 826.0,444.0 826.5,444.2 827.0,444.4 827.5,445.2 828.0,446.5 828.5,447.7 829.0,449.0 829.5,450.5 830.0,452.0 830.5,453.5 831.0,455.7 831.5,458.9 832.0,462.0 832.5,463.4 833.0,463.6 833.5,463.7 834.0,463.9 834.5,464.1 835.0,464.3 835.5,464.6 836.0,464.9 836.5,465.3 837.0,465.6 837.5,465.9 838.0,466.1 838.5,466.3 839.0,466.5 839.5,466.6 840.0,466.8 840.5,466.8 841.0,466.7 841.5,466.5 842.0,466.3 842.5,466.2 843.0,466.0 843.5,466.2 844.0,466.4 844.5,466.6 845.0,466.9 845.5,468.6 846.0,470.7 846.5,472.8 847.0,473.4 847.5,473.6 848.0,473.8 848.5,474.0 849.0,474.4 849.5,474.9 850.0,475.4 850.5,475.9 851.0,478.0 851.5,480.1 852.0,482.2 852.5,481.7 853.0,481.2 853.5,480.7 854.0,479.0 854.5,475.4 855.0,471.9 855.5,469.6 856.0,468.1 856.5,466.6 857.0,465.1 857.5,463.3 858.0,461.5 858.5,459.6 859.0,457.8 859.5,456.1 860.0,454.3 860.5,452.6 861.0,450.8 861.5,449.3 862.0,447.8 862.5,446.3 863.0,444.8 863.5,443.8 864.0,442.8 864.5,441.9 865.0,440.9 865.5,440.0 866.0,439.2 866.5,438.3 867.0,437.5 867.5,436.7 868.0,435.8 868.5,435.1 869.0,434.4 869.5,433.8 870.0,433.1 870.5,432.4 871.0,431.8 871.5,431.2 872.0,430.6 872.5,430.0 873.0,429.4 873.5,429.1 874.0,428.9 874.5,428.7 875.0,428.5 875.5,428.4 876.0,429.1 876.5,429.7 877.0,430.4 877.5,431.0 878.0,431.9 878.5,432.9 879.0,433.8 879.5,434.8 880.0,435.8 880.5,437.0 881.0,438.2 881.5,439.5 882.0,440.7 882.5,442.0 883.0,443.2 883.5,444.5 884.0,445.1 884.5,445.7 885.0,446.3 885.5,446.8 886.0,447.4 886.5,447.8 887.0,448.2 887.5,448.7 888.0,449.1 888.5,449.7 889.0,450.4 889.5,451.0 890.0,451.6 890.5,452.3 891.0,453.1 891.5,453.9 892.0,454.7 892.5,455.4 893.0,456.2 893.5,456.9 894.0,457.6 894.5,458.4 895.0,459.2 895.5,460.2 896.0,461.2 896.5,462.2 897.0,462.7 897.5,463.2 898.0,463.6 898.5,464.0 899.0,464.3 899.5,464.5 900.0,464.6 900.5,464.8 901.0,465.0 901.5,465.2 902.0,465.6 902.5,465.9 903.0,466.3 903.5,466.7 904.0,467.1 904.5,467.5 905.0,467.9 905.5,468.4 906.0,468.7 906.5,468.9 907.0,469.1 907.5,469.4 908.0,469.6 908.5,469.3 909.0,468.9 909.5,468.5 910.0,468.1 910.5,467.7 911.0,467.3 911.5,467.0 912.0,466.6 912.5,466.2 913.0,466.1 913.5,466.3 914.0,466.5 914.5,466.7 915.0,466.9 915.5,467.1 916.0,467.3 916.5,467.6 917.0,467.8 917.5,468.0 918.0,468.2 918.5,468.5 919.0,469.0 919.5,470.6 920.0,472.2 920.5,473.3 921.0,473.4 921.5,473.6 922.0,473.8 922.5,473.9 923.0,474.1 923.5,474.1 924.0,474.1 924.5,474.1 925.0,474.1 925.5,474.1 926.0,474.1 926.5,474.1 927.0,474.1 927.5,474.1 928.0,473.1 928.5,472.1 929.0,471.1 929.5,469.7 930.0,467.7 930.5,465.7 931.0,463.7 931.5,462.1 932.0,460.6 932.5,459.1 933.0,457.8 933.5,457.0 934.0,456.3 934.5,455.6 935.0,455.4 935.5,455.6 936.0,455.8 936.5,456.0 937.0,456.0 937.5,455.3 938.0,454.5 938.5,453.7 939.0,452.9 939.5,452.3 940.0,451.8 940.5,451.3 941.0,450.8 941.5,451.6 942.0,452.3 942.5,453.1 943.0,453.8 943.5,454.6 944.0,455.4 944.5,456.2 945.0,456.9 945.5,457.6 946.0,458.2 946.5,458.8 947.0,459.3 947.5,460.0 948.0,460.8 948.5,461.7 949.0,462.5 949.5,463.3 950.0,465.1 950.5,465.1 951.0,465.1 951.5,465.1 952.0,465.1 952.5,465.3 953.0,465.7 953.5,466.1 954.0,466.5 954.5,466.9 955.0,468.4 955.5,469.9 956.0,471.4 956.5,473.0 957.0,474.8 957.5,476.5 958.0,478.2 958.5,479.8 959.0,481.3 959.5,482.8 960.0,484.2 960.5,485.2 961.0,486.2 961.5,487.2 962.0,487.5 962.5,487.2 963.0,486.9 963.5,486.7 964.0,486.2 964.5,485.7 965.0,485.2 965.5,484.7 966.0,484.2 966.5,484.0 967.0,484.0 967.5,484.0 968.0,484.0 968.5,484.0 969.0,484.0 969.5,484.2 970.0,484.4 970.5,484.5 971.0,484.7 971.5,484.9 972.0,485.9 972.5,487.1 973.0,488.4 973.5,489.7 974.0,491.2 974.5,492.6 975.0,494.1 975.5,495.1 976.0,495.9 976.5,496.6 977.0,497.4 977.5,497.9 978.0,498.4 978.5,498.9 979.0,499.9 979.5,501.7 980.0,503.4 980.5,505.1 981.0,503.9 981.5,501.9 982.0,499.9 982.5,498.2 983.0,497.7 983.5,497.2 984.0,496.7 984.5,496.4 985.0,496.1 985.5,495.9 986.0,495.6 986.5,496.2 987.0,496.9 987.5,497.5 988.0,498.2 988.5,498.6 989.0,499.0 989.5,499.4 990.0,499.7 990.5,500.1 991.0,500.4 991.5,500.6 992.0,500.9 992.5,500.5 993.0,499.2 993.5,498.0 994.0,496.8 994.5,496.1 995.0,495.6 995.5,495.1 996.0,495.0 996.5,496.5 997.0,498.0 997.5,498.3 998.0,498.3 998.5,498.3 999.0,496.1 999.5,493.4 1000.0,490.7 1000.5,487.7 1001.0,484.0 1001.5,480.3 1002.0,476.5 1002.5,473.8 1003.0,471.8 1003.5,469.8 1004.0,467.8 1004.5,466.8 1005.0,465.9 1005.5,465.2 1006.0,465.4 1006.5,465.6 1007.0,465.9 1007.5,467.2 1008.0,469.2 1008.5,471.2 1009.0,473.2 1009.5,475.7 1010.0,478.2 1010.5,480.7 1011.0,483.2 1011.5,485.8 1012.0,488.4 1012.5,490.7 1013.0,492.9 1013.5,495.2 1014.0,496.9 1014.5,497.9 1015.0,498.9 1015.5,499.9 1016.0,500.4 1016.5,500.8 1017.0,501.1 1017.5,501.5 1018.0,501.9 1018.5,503.4 1019.0,504.9 1019.5,506.4 1020.0,507.6 1020.5,508.4 1021.0,509.1 1021.5,506.0 1022.0,502.9 1022.5,499.7 1023.0,496.6 1023.5,493.4 1024.0,491.5 1024.5,490.5 1025.0,489.5 1025.5,488.5 1026.0,488.2 1026.5,487.9 1027.0,487.6 1027.5,487.3 1028.0,487.9 1028.5,489.0 1029.0,490.1 1029.5,491.2 1030.0,491.4 1030.5,491.7 1031.0,492.0 1031.5,491.8 1032.0,491.0 1032.5,490.3 1033.0,489.5 1033.5,490.9 1034.0,492.8 1034.5,494.7 1035.0,496.5 1035.5,498.3 1036.0,500.1 1036.5,501.9 1037.0,503.6 1037.5,505.4 1038.0,507.5 1038.5,510.1 1039.0,512.7 1039.5,514.8 1040.0,516.9 1040.5,518.2 1041.0,518.5 1041.5,518.7 1042.0,519.0 1042.5,518.2 1043.0,517.3 1043.5,516.3 1044.0,515.8 1044.5,515.3 1045.0,514.8 1045.5,514.1 1046.0,513.1 1046.5,512.1 1047.0,511.1 1047.5,508.0 1048.0,504.3 1048.5,500.3 1049.0,496.2 1049.5,492.1 1050.0,488.7 1050.5,485.4 1051.0,483.5 1051.5,482.7 1052.0,483.2 1052.5,485.8 1053.0,488.4 1053.5,490.8 1054.0,493.2 1054.5,495.6 1055.0,497.5 1055.5,499.1 1056.0,500.7 1056.5,501.2 1057.0,501.5 1057.5,501.8 1058.0,503.1 1058.5,504.6 1059.0,506.3 1059.5,508.4 1060.0,510.5 1060.5,512.2 1061.0,513.8 1061.5,516.1 1062.0,518.7 1062.5,521.2 1063.0,523.3 1063.5,525.4 1064.0,527.2 1064.5,528.8 1065.0,530.4 1065.5,527.9 1066.0,524.4 1066.5,524.4 1067.0,524.4 1067.5,524.4 1068.0,525.0 1068.5,526.3 1069.0,527.7 1069.5,526.8 1070.0,525.3 1070.5,523.8 1071.0,522.4 1071.5,521.4 1072.0,520.4 1072.5,519.4 1073.0,519.4 1073.5,520.0 1074.0,520.7 1074.5,521.6 1075.0,522.6 1075.5,523.6 1076.0,525.4 1076.5,530.3 1077.0,535.2 1077.5,540.9 1078.0,546.7 1078.5,551.4 1079.0,555.9 1079.5,553.8 1080.0,560.3 1080.5,559.8 1081.0,556.4 1081.5,562.9 1082.0,557.8 1082.5,552.7 1083.0,547.6 1083.5,547.2 1084.0,549.7 1084.5,551.5 1085.0,553.1 1085.5,554.6 1086.0,554.8 1086.5,553.7 1087.0,555.3 1087.5,554.4 1088.0,550.1 1088.5,545.7 1089.0,541.3 1089.5,536.4 1090.0,531.5 1090.5,526.7 1091.0,524.0 1091.5,522.8 1092.0,521.6 1092.5,520.4 1093.0,518.2 1093.5,514.5 1094.0,510.8 1094.5,507.0 1095.0,504.4 1095.5,503.4 1096.0,502.4 1096.5,501.4 1097.0,500.4 1097.5,499.5 1098.0,498.9 1098.5,498.2 1099.0,497.6 1099.5,496.9 1100.0,494.5 1100.5,489.7 1101.0,484.8 1101.5,479.9 1102.0,475.4 1102.5,471.0 1103.0,477.0 1103.5,484.0 1104.0,491.0 1104.5,498.0 1105.0,503.7 1105.5,509.3 1106.0,515.0 1106.5,516.2 1107.0,517.5 1107.5,518.8 1108.0,520.0 1108.5,521.9 1109.0,523.8 1109.5,525.6 1110.0,527.5 1110.5,529.4 1111.0,531.2 1111.5,533.1 1112.0,535.0 1112.5,536.2 1113.0,537.5 1113.5,538.8 1114.0,540.0 1114.5,541.2 1115.0,542.5 1115.5,543.8 1116.0,545.0 1116.5,545.7 1117.0,546.4 1117.5,547.1 1118.0,550.2 1118.5,552.5 1119.0,550.8 1119.5,549.8 1120.0,550.4 1120.5,551.0 1121.0,551.5 1121.5,552.3 1122.0,553.6 1122.5,555.0 1123.0,556.4 1123.5,557.8 1124.0,559.1 1124.5,560.5 1125.0,561.9 1125.5,563.8 1126.0,567.9 1126.5,572.0 1127.0,576.1 1127.5,580.2 1128.0,582.8 1128.5,585.0 1129.0,587.2 1129.5,589.4 1130.0,591.6 1130.5,593.8 1131.0,596.0 1131.5,603.5 1132.0,611.0 1132.5,618.5 1133.0,630.5 1133.5,642.6 1134.0,643.6 1134.5,641.8 1135.0,640.0 1135.5,646.0 1136.0,652.0 1136.5,658.0 1137.0,664.0 1137.5,664.0 1138.0,664.0 1138.5,664.0 1139.0,664.0 1139.5,664.0 1140.0,664.0 1140.5,664.0 1141.0,664.0 1141.5,664.0 1142.0,645.9 1142.5,632.4 1143.0,625.8 1143.5,619.2 1144.0,612.6 1144.5,609.3 1145.0,608.3 1145.5,607.2 1146.0,606.1 1146.5,605.0 1147.0,604.8 1147.5,604.5 1148.0,604.2 1148.5,604.0 1149.0,600.9 1149.5,597.8 1150.0,595.0 1150.5,592.5 1151.0,590.0 1151.5,592.0 1152.0,589.0 1152.5,586.0 1153.0,583.0 1153.5,591.1 1154.0,596.0 1154.5,596.0 1155.0,596.0 1155.0,674.8" fill="#65a9ad"/>
<path d="M27.5 85.9V674.8M78.5 85.9V674.8M129.5 85.9V674.8M180.5 85.9V674.8M232.5 85.9V674.8M283.5 85.9V674.8M334.5 85.9V674.8M385.5 85.9V674.8M436.5 85.9V674.8M487.5 85.9V674.8M538.5 85.9V674.8M590.5 85.9V674.8M641.5 85.9V674.8M692.5 85.9V674.8M743.5 85.9V674.8M794.5 85.9V674.8M845.5 85.9V674.8M896.5 85.9V674.8M948.5 85.9V674.8M999.5 85.9V674.8M1050.5 85.9V674.8M1101.5 85.9V674.8M1152.5 85.9V674.8M27.4 90.5H1155.4M27.4 113.5H1155.4M27.4 135.5H1155.4M27.4 158.5H1155.4M27.4 181.5H1155.4M27.4 204.5H1155.4M27.4 227.5H1155.4M27.4 250.5H1155.4M27.4 273.5H1155.4M27.4 296.5H1155.4M27.4 318.5H1155.4M27.4 341.5H1155.4M27.4 364.5H1155.4M27.4 387.5H1155.4M27.4 410.5H1155.4M27.4 433.5H1155.4M27.4 456.5H1155.4M27.4 478.5H1155.4M27.4 501.5H1155.4M27.4 524.5H1155.4M27.4 547.5H1155.4M27.4 570.5H1155.4M27.4 593.5H1155.4M27.4 616.5H1155.4M27.4 639.5H1155.4M27.4 661.5H1155.4" stroke="#7fc0c4" stroke-width="1.4" fill="none" opacity="0.13" clip-path="url(#fc)"/>
<polyline points="28.0,370.5 28.5,366.8 29.0,363.2 29.5,341.8 30.0,316.5 30.5,292.8 31.0,273.3 31.5,263.2 32.0,256.5 32.5,250.0 33.0,249.3 33.5,248.7 34.0,248.0 34.5,253.8 35.0,259.7 35.5,269.2 36.0,281.2 36.5,282.6 37.0,276.9 37.5,271.1 38.0,267.5 38.5,264.5 39.0,262.7 39.5,266.4 40.0,270.0 40.5,273.2 41.0,276.4 41.5,271.9 42.0,265.6 42.5,259.3 43.0,254.0 43.5,249.0 44.0,246.9 44.5,254.8 45.0,265.8 45.5,276.8 46.0,269.3 46.5,257.2 47.0,247.5 47.5,241.4 48.0,235.2 48.5,239.3 49.0,245.8 49.5,252.5 50.0,259.8 50.5,270.0 51.0,264.0 51.5,258.0 52.0,252.0 52.5,247.6 53.0,243.1 53.5,238.7 54.0,234.4 54.5,230.5 55.0,226.6 55.5,232.2 56.0,237.8 56.5,241.9 57.0,245.2 57.5,248.0 58.0,250.5 58.5,253.1 59.0,255.6 59.5,259.5 60.0,269.2 60.5,281.0 61.0,296.0 61.5,299.9 62.0,287.1 62.5,277.9 63.0,271.0 63.5,280.5 64.0,290.0 64.5,306.5 65.0,323.0 65.5,296.5 66.0,270.0 66.5,257.8 67.0,250.7 67.5,264.2 68.0,277.6 68.5,290.6 69.0,303.6 69.5,316.6 70.0,323.8 70.5,307.6 71.0,291.5 71.5,281.0 72.0,274.3 72.5,271.2 73.0,268.9 73.5,264.2 74.0,257.8 74.5,257.8 75.0,267.4 75.5,278.4 76.0,295.2 76.5,312.1 77.0,329.0 77.5,316.8 78.0,304.6 78.5,292.3 79.0,281.3 79.5,272.1 80.0,262.8 80.5,257.9 81.0,270.2 81.5,282.6 82.0,295.3 82.5,308.5 83.0,321.7 83.5,319.1 84.0,306.0 84.5,292.9 85.0,282.5 85.5,276.2 86.0,270.0 86.5,265.8 87.0,261.7 87.5,257.5 88.0,252.8 88.5,247.2 89.0,241.6 89.5,236.1 90.0,230.5 90.5,241.0 91.0,251.5 91.5,262.0 92.0,283.8 92.5,305.6 93.0,319.1 93.5,330.6 94.0,342.0 94.5,311.8 95.0,281.5 95.5,280.8 96.0,280.2 96.5,279.5 97.0,284.4 97.5,289.2 98.0,295.6 98.5,308.1 99.0,320.5 99.5,327.0 100.0,326.2 100.5,324.9 101.0,323.6 101.5,321.0 102.0,317.4 102.5,310.3 103.0,295.7 103.5,284.1 104.0,274.4 104.5,267.9 105.0,262.5 105.5,259.9 106.0,257.3 106.5,259.7 107.0,262.1 107.5,266.1 108.0,276.6 108.5,287.1 109.0,307.5 109.5,325.7 110.0,336.7 110.5,350.7 111.0,358.7 111.5,351.9 112.0,340.8 112.5,330.1 113.0,320.9 113.5,314.4 114.0,311.0 114.5,314.5 115.0,318.1 115.5,318.8 116.0,315.4 116.5,311.9 117.0,307.1 117.5,301.5 118.0,296.6 118.5,294.7 119.0,292.9 119.5,294.0 120.0,297.1 120.5,300.2 121.0,305.5 121.5,311.3 122.0,317.1 122.5,318.5 123.0,318.8 123.5,319.1 124.0,320.8 124.5,323.4 125.0,326.0 125.5,332.5 126.0,343.4 126.5,332.4 127.0,322.8 127.5,315.9 128.0,309.0 128.5,302.3 129.0,295.8 129.5,289.8 130.0,283.9 130.5,280.1 131.0,277.9 131.5,277.0 132.0,281.7 132.5,286.4 133.0,292.8 133.5,299.3 134.0,308.2 134.5,317.2 135.0,326.7 135.5,336.4 136.0,346.0 136.5,354.8 137.0,364.7 137.5,353.7 138.0,342.7 138.5,331.7 139.0,320.7 139.5,309.0 140.0,297.8 140.5,292.4 141.0,286.9 141.5,281.5 142.0,278.2 142.5,274.8 143.0,274.4 143.5,278.3 144.0,282.2 144.5,286.3 145.0,291.6 145.5,296.8 146.0,302.3 146.5,308.0 147.0,310.3 147.5,302.3 148.0,296.8 148.5,293.2 149.0,289.7 149.5,290.6 150.0,294.6 150.5,298.5 151.0,303.5 151.5,310.0 152.0,316.7 152.5,323.5 153.0,332.0 153.5,340.9 154.0,349.9 154.5,356.7 155.0,349.6 155.5,338.0 156.0,331.8 156.5,327.0 157.0,329.6 157.5,334.0 158.0,338.0 158.5,340.1 159.0,342.2 159.5,341.1 160.0,335.3 160.5,329.5 161.0,324.8 161.5,321.8 162.0,318.7 162.5,316.1 163.0,315.0 163.5,313.8 164.0,312.7 164.5,314.4 165.0,316.8 165.5,319.2 166.0,322.0 166.5,325.1 167.0,328.1 167.5,331.2 168.0,335.1 168.5,339.3 169.0,343.4 169.5,344.1 170.0,344.7 170.5,345.4 171.0,345.1 171.5,344.8 172.0,344.5 172.5,348.9 173.0,354.4 173.5,358.4 174.0,355.6 174.5,352.9 175.0,348.6 175.5,342.1 176.0,335.4 176.5,328.2 177.0,320.9 177.5,313.8 178.0,307.3 178.5,300.8 179.0,294.4 179.5,288.3 180.0,284.0 180.5,279.7 181.0,275.4 181.5,272.9 182.0,271.5 182.5,270.2 183.0,271.3 183.5,272.4 184.0,273.5 184.5,278.9 185.0,285.3 185.5,291.8 186.0,298.3 186.5,305.1 187.0,312.1 187.5,318.5 188.0,324.4 188.5,330.6 189.0,337.0 189.5,343.4 190.0,341.0 190.5,338.6 191.0,336.9 191.5,337.9 192.0,338.9 192.5,339.9 193.0,339.5 193.5,337.0 194.0,334.5 194.5,332.0 195.0,329.5 195.5,324.8 196.0,317.9 196.5,311.4 197.0,305.0 197.5,299.1 198.0,293.1 198.5,290.1 199.0,287.0 199.5,284.0 200.0,283.0 200.5,282.4 201.0,286.2 201.5,290.0 202.0,293.9 202.5,297.9 203.0,302.0 203.5,305.8 204.0,309.5 204.5,311.5 205.0,306.7 205.5,301.8 206.0,297.5 206.5,294.0 207.0,290.4 207.5,288.0 208.0,287.2 208.5,286.5 209.0,285.8 209.5,285.8 210.0,287.1 210.5,288.4 211.0,290.9 211.5,295.0 212.0,299.1 212.5,304.4 213.0,310.3 213.5,316.3 214.0,321.1 214.5,326.0 215.0,330.8 215.5,333.5 216.0,335.7 216.5,324.7 217.0,316.3 217.5,311.8 218.0,307.3 218.5,304.0 219.0,305.7 219.5,307.3 220.0,309.1 220.5,311.9 221.0,314.6 221.5,319.8 222.0,326.3 222.5,335.1 223.0,344.1 223.5,353.8 224.0,363.5 224.5,365.8 225.0,351.6 225.5,337.5 226.0,327.7 226.5,320.8 227.0,313.9 227.5,310.7 228.0,308.4 228.5,306.2 229.0,305.8 229.5,306.0 230.0,306.2 230.5,305.4 231.0,304.7 231.5,303.9 232.0,303.2 232.5,302.4 233.0,301.7 233.5,300.9 234.0,303.6 234.5,307.1 235.0,310.6 235.5,314.5 236.0,320.0 236.5,325.5 237.0,331.0 237.5,335.0 238.0,338.0 238.5,341.0 239.0,344.0 239.5,343.8 240.0,343.6 240.5,343.4 241.0,343.2 241.5,344.5 242.0,346.7 242.5,348.9 243.0,351.8 243.5,354.8 244.0,357.7 244.5,360.8 245.0,364.2 245.5,367.6 246.0,371.1 246.5,374.5 247.0,377.1 247.5,379.8 248.0,382.4 248.5,385.0 249.0,384.9 249.5,373.9 250.0,363.6 250.5,357.1 251.0,351.2 251.5,345.2 252.0,341.3 252.5,338.0 253.0,334.7 253.5,331.3 254.0,328.0 254.5,325.1 255.0,322.7 255.5,320.4 256.0,318.0 256.5,315.7 257.0,314.5 257.5,313.6 258.0,312.7 258.5,311.7 259.0,312.2 259.5,314.9 260.0,317.5 260.5,320.1 261.0,324.7 261.5,329.9 262.0,335.0 262.5,339.8 263.0,344.7 263.5,349.7 264.0,354.9 264.5,360.1 265.0,362.6 265.5,365.0 266.0,361.1 266.5,355.6 267.0,350.3 267.5,345.8 268.0,341.3 268.5,339.2 269.0,337.7 269.5,336.2 270.0,335.5 270.5,338.0 271.0,340.5 271.5,343.0 272.0,345.1 272.5,347.0 273.0,348.8 273.5,350.7 274.0,352.5 274.5,355.7 275.0,359.2 275.5,362.7 276.0,366.4 276.5,370.9 277.0,375.4 277.5,379.9 278.0,381.4 278.5,380.9 279.0,380.4 279.5,379.9 280.0,377.9 280.5,375.9 281.0,373.9 281.5,371.1 282.0,367.1 282.5,363.1 283.0,359.1 283.5,357.5 284.0,356.5 284.5,355.5 285.0,354.5 285.5,353.2 286.0,352.0 286.5,350.8 287.0,352.3 287.5,355.6 288.0,359.3 288.5,364.2 289.0,369.1 289.5,367.7 290.0,366.3 290.5,364.7 291.0,362.7 291.5,360.7 292.0,358.7 292.5,357.1 293.0,355.5 293.5,354.0 294.0,352.5 294.5,350.9 295.0,350.6 295.5,351.1 296.0,351.6 296.5,352.1 297.0,351.9 297.5,351.6 298.0,351.4 298.5,351.1 299.0,350.9 299.5,350.7 300.0,350.5 300.5,350.3 301.0,351.6 301.5,352.8 302.0,354.1 302.5,355.3 303.0,356.6 303.5,357.8 304.0,359.5 304.5,361.5 305.0,363.5 305.5,365.5 306.0,367.5 306.5,369.7 307.0,372.7 307.5,375.7 308.0,378.7 308.5,385.2 309.0,393.9 309.5,391.7 310.0,386.2 310.5,380.7 311.0,375.8 311.5,373.4 312.0,371.0 312.5,368.9 313.0,367.8 313.5,366.6 314.0,367.0 314.5,367.8 315.0,368.5 315.5,370.7 316.0,377.2 316.5,384.3 317.0,386.3 317.5,388.3 318.0,390.3 318.5,396.8 319.0,403.8 319.5,410.1 320.0,401.8 320.5,395.0 321.0,388.5 321.5,383.0 322.0,377.5 322.5,372.0 323.0,368.1 323.5,364.6 324.0,361.1 324.5,354.7 325.0,348.2 325.5,348.0 326.0,347.8 326.5,347.6 327.0,347.4 327.5,346.5 328.0,345.1 328.5,343.7 329.0,342.4 329.5,341.0 330.0,340.6 330.5,340.2 331.0,339.8 331.5,339.4 332.0,338.8 332.5,337.6 333.0,336.5 333.5,335.4 334.0,334.3 334.5,333.2 335.0,332.7 335.5,334.6 336.0,336.5 336.5,338.4 337.0,340.2 337.5,342.7 338.0,345.6 338.5,348.4 339.0,351.3 339.5,353.8 340.0,354.8 340.5,355.8 341.0,356.8 341.5,357.8 342.0,358.8 342.5,363.8 343.0,369.7 343.5,374.7 344.0,378.3 344.5,381.9 345.0,384.4 345.5,385.3 346.0,386.1 346.5,386.9 347.0,387.8 347.5,388.6 348.0,389.8 348.5,390.9 349.0,392.1 349.5,393.3 350.0,394.4 350.5,393.5 351.0,391.3 351.5,389.0 352.0,386.8 352.5,384.5 353.0,382.9 353.5,383.8 354.0,384.7 354.5,385.5 355.0,384.9 355.5,383.2 356.0,381.6 356.5,379.9 357.0,378.2 357.5,376.5 358.0,374.5 358.5,372.5 359.0,370.6 359.5,368.6 360.0,366.6 360.5,364.5 361.0,362.3 361.5,360.1 362.0,358.0 362.5,355.8 363.0,354.2 363.5,353.6 364.0,353.0 364.5,352.3 365.0,351.9 365.5,352.1 366.0,352.4 366.5,352.6 367.0,354.2 367.5,356.7 368.0,355.9 368.5,354.2 369.0,352.5 369.5,350.8 370.0,349.1 370.5,349.1 371.0,349.1 371.5,349.6 372.0,351.8 372.5,354.1 373.0,356.3 373.5,359.7 374.0,363.8 374.5,367.9 375.0,370.9 375.5,373.9 376.0,376.9 376.5,379.5 377.0,381.5 377.5,383.5 378.0,385.5 378.5,387.7 379.0,389.9 379.5,389.4 380.0,384.6 380.5,379.8 381.0,372.3 381.5,365.8 382.0,361.2 382.5,359.0 383.0,356.8 383.5,354.5 384.0,354.0 384.5,353.4 385.0,354.2 385.5,355.8 386.0,357.4 386.5,359.0 387.0,357.7 387.5,356.5 388.0,355.2 388.5,354.0 389.0,354.0 389.5,356.2 390.0,358.3 390.5,360.4 391.0,362.0 391.5,363.5 392.0,365.0 392.5,366.5 393.0,368.0 393.5,369.4 394.0,370.9 394.5,371.8 395.0,372.3 395.5,372.8 396.0,373.3 396.5,373.8 397.0,374.6 397.5,376.3 398.0,378.1 398.5,379.8 399.0,382.0 399.5,384.5 400.0,387.0 400.5,389.5 401.0,391.3 401.5,393.1 402.0,394.9 402.5,393.4 403.0,391.9 403.5,388.0 404.0,382.4 404.5,376.9 405.0,374.6 405.5,372.2 406.0,369.9 406.5,367.6 407.0,365.7 407.5,364.5 408.0,363.2 408.5,362.0 409.0,362.7 409.5,363.9 410.0,365.2 410.5,366.5 411.0,368.0 411.5,369.4 412.0,370.9 412.5,372.2 413.0,373.5 413.5,374.8 414.0,376.0 414.5,377.8 415.0,379.5 415.5,381.2 416.0,382.9 416.5,384.4 417.0,385.9 417.5,387.4 418.0,388.5 418.5,389.5 419.0,390.5 419.5,391.6 420.0,393.1 420.5,394.6 421.0,396.1 421.5,395.8 422.0,394.3 422.5,393.6 423.0,393.1 423.5,392.6 424.0,392.0 424.5,391.1 425.0,390.2 425.5,388.7 426.0,385.0 426.5,381.3 427.0,379.1 427.5,377.4 428.0,375.6 428.5,374.1 429.0,373.9 429.5,373.6 430.0,373.4 430.5,374.1 431.0,375.5 431.5,376.9 432.0,375.9 432.5,375.0 433.0,374.1 433.5,373.9 434.0,373.6 434.5,373.4 435.0,374.7 435.5,377.1 436.0,379.5 436.5,381.9 437.0,384.1 437.5,385.8 438.0,385.5 438.5,385.1 439.0,384.8 439.5,384.5 440.0,384.2 440.5,384.9 441.0,385.9 441.5,386.9 442.0,387.4 442.5,385.9 443.0,384.4 443.5,382.9 444.0,381.6 444.5,380.3 445.0,379.1 445.5,377.9 446.0,376.3 446.5,373.3 447.0,370.4 447.5,367.4 448.0,362.7 448.5,356.9 449.0,350.7 449.5,343.5 450.0,337.0 450.5,337.0 451.0,337.0 451.5,337.0 452.0,337.0 452.5,338.9 453.0,342.1 453.5,345.4 454.0,351.9 454.5,362.8 455.0,375.6 455.5,383.5 456.0,385.2 456.5,386.8 457.0,388.4 457.5,389.9 458.0,391.2 458.5,392.6 459.0,393.9 459.5,395.2 460.0,396.6 460.5,398.3 461.0,400.0 461.5,401.6 462.0,403.3 462.5,405.0 463.0,406.4 463.5,407.7 464.0,409.0 464.5,410.4 465.0,411.7 465.5,412.4 466.0,412.3 466.5,412.1 467.0,411.9 467.5,411.8 468.0,411.6 468.5,413.9 469.0,416.1 469.5,417.5 470.0,415.5 470.5,413.5 471.0,411.5 471.5,410.0 472.0,408.8 472.5,407.7 473.0,406.5 473.5,405.4 474.0,404.2 474.5,402.7 475.0,400.7 475.5,398.7 476.0,396.7 476.5,394.7 477.0,392.7 477.5,390.7 478.0,388.7 478.5,386.7 479.0,384.7 479.5,382.7 480.0,380.8 480.5,379.0 481.0,377.2 481.5,375.4 482.0,373.6 482.5,371.9 483.0,371.2 483.5,370.4 484.0,369.7 484.5,370.1 485.0,371.4 485.5,372.6 486.0,373.8 486.5,373.4 487.0,373.0 487.5,372.6 488.0,372.2 488.5,371.5 489.0,370.8 489.5,370.0 490.0,369.2 490.5,368.5 491.0,368.2 491.5,368.0 492.0,367.8 492.5,368.4 493.0,370.4 493.5,372.3 494.0,374.3 494.5,376.3 495.0,378.3 495.5,380.3 496.0,381.5 496.5,379.6 497.0,377.8 497.5,377.2 498.0,376.9 498.5,376.6 499.0,377.5 499.5,378.8 500.0,380.0 500.5,381.1 501.0,381.8 501.5,382.4 502.0,383.1 502.5,383.7 503.0,383.9 503.5,384.1 504.0,384.3 504.5,384.5 505.0,384.9 505.5,386.1 506.0,387.4 506.5,388.6 507.0,388.5 507.5,387.5 508.0,386.5 508.5,385.5 509.0,385.0 509.5,384.5 510.0,384.0 510.5,381.3 511.0,375.4 511.5,369.4 512.0,364.9 512.5,360.4 513.0,355.9 513.5,352.0 514.0,349.0 514.5,346.0 515.0,343.0 515.5,341.2 516.0,339.7 516.5,338.2 517.0,336.8 517.5,335.5 518.0,334.3 518.5,339.2 519.0,344.0 519.5,350.5 520.0,358.5 520.5,368.5 521.0,374.2 521.5,375.6 522.0,374.2 522.5,372.7 523.0,371.8 523.5,371.4 524.0,372.6 524.5,375.0 525.0,377.4 525.5,379.5 526.0,381.5 526.5,383.5 527.0,385.5 527.5,387.0 528.0,388.5 528.5,390.0 529.0,391.7 529.5,393.7 530.0,395.7 530.5,397.7 531.0,398.9 531.5,399.9 532.0,400.9 532.5,401.5 533.0,400.5 533.5,399.5 534.0,398.5 534.5,397.5 535.0,396.4 535.5,395.3 536.0,394.2 536.5,393.7 537.0,394.0 537.5,394.2 538.0,394.4 538.5,395.5 539.0,396.8 539.5,398.0 540.0,398.7 540.5,397.5 541.0,396.3 541.5,395.0 542.0,394.3 542.5,393.9 543.0,393.5 543.5,393.1 544.0,394.8 544.5,396.4 545.0,398.1 545.5,400.3 546.0,402.6 546.5,404.1 547.0,405.1 547.5,406.1 548.0,407.1 548.5,406.9 549.0,406.7 549.5,406.5 550.0,406.3 550.5,405.9 551.0,404.4 551.5,402.9 552.0,401.4 552.5,399.9 553.0,398.6 553.5,397.4 554.0,396.1 554.5,394.3 555.0,391.5 555.5,388.8 556.0,386.1 556.5,383.6 557.0,381.2 557.5,378.8 558.0,376.9 558.5,375.3 559.0,373.6 559.5,371.9 560.0,370.0 560.5,368.0 561.0,366.0 561.5,364.0 562.0,362.6 562.5,361.2 563.0,359.7 563.5,359.9 564.0,362.3 564.5,364.7 565.0,367.1 565.5,368.4 566.0,369.4 566.5,370.4 567.0,371.3 567.5,371.8 568.0,372.3 568.5,372.7 569.0,373.2 569.5,373.7 570.0,374.1 570.5,374.5 571.0,374.9 571.5,375.3 572.0,376.0 572.5,378.1 573.0,380.2 573.5,381.3 574.0,381.8 574.5,382.4 575.0,382.9 575.5,383.9 576.0,384.9 576.5,385.9 577.0,387.0 577.5,388.2 578.0,389.4 578.5,390.7 579.0,391.9 579.5,393.1 580.0,394.2 580.5,395.4 581.0,396.6 581.5,397.8 582.0,398.9 582.5,400.1 583.0,401.3 583.5,402.5 584.0,402.9 584.5,403.1 585.0,403.3 585.5,403.5 586.0,403.7 586.5,403.9 587.0,404.1 587.5,404.3 588.0,404.8 588.5,406.0 589.0,407.2 589.5,408.5 590.0,408.3 590.5,407.0 591.0,405.8 591.5,404.5 592.0,403.0 592.5,401.5 593.0,400.0 593.5,398.8 594.0,398.0 594.5,397.3 595.0,396.6 595.5,397.2 596.0,398.2 596.5,399.2 597.0,400.1 597.5,400.5 598.0,400.8 598.5,401.2 599.0,401.6 599.5,402.0 600.0,402.5 600.5,403.0 601.0,403.5 601.5,404.0 602.0,404.5 602.5,405.1 603.0,405.8 603.5,406.4 604.0,407.1 604.5,406.7 605.0,406.1 605.5,405.5 606.0,398.4 606.5,382.5 607.0,369.1 607.5,362.6 608.0,359.3 608.5,356.1 609.0,353.6 609.5,352.1 610.0,350.6 610.5,349.1 611.0,348.0 611.5,347.0 612.0,345.9 612.5,344.9 613.0,343.7 613.5,342.2 614.0,340.7 614.5,343.1 615.0,345.5 615.5,352.0 616.0,360.2 616.5,376.9 617.0,392.3 617.5,402.8 618.0,408.7 618.5,410.0 619.0,411.4 619.5,411.5 620.0,411.2 620.5,411.0 621.0,410.9 621.5,411.3 622.0,411.7 622.5,412.1 623.0,412.4 623.5,412.2 624.0,411.4 624.5,410.7 625.0,409.9 625.5,407.9 626.0,405.9 626.5,403.9 627.0,401.9 627.5,399.9 628.0,397.9 628.5,395.9 629.0,394.7 629.5,393.7 630.0,392.6 630.5,391.6 631.0,390.7 631.5,390.1 632.0,389.5 632.5,388.8 633.0,388.2 633.5,387.8 634.0,387.5 634.5,387.1 635.0,386.7 635.5,385.7 636.0,383.7 636.5,381.8 637.0,376.9 637.5,367.0 638.0,360.5 638.5,356.0 639.0,353.2 639.5,352.9 640.0,352.7 640.5,352.4 641.0,352.4 641.5,352.5 642.0,352.6 642.5,352.6 643.0,352.7 643.5,352.2 644.0,351.7 644.5,350.9 645.0,349.8 645.5,348.8 646.0,351.0 646.5,355.3 647.0,358.9 647.5,359.9 648.0,360.9 648.5,361.9 649.0,361.8 649.5,360.9 650.0,360.0 650.5,359.5 651.0,359.2 651.5,358.9 652.0,358.7 652.5,360.6 653.0,362.4 653.5,364.1 654.0,365.6 654.5,367.1 655.0,368.6 655.5,370.7 656.0,372.8 656.5,377.3 657.0,383.8 657.5,391.9 658.0,399.8 658.5,406.5 659.0,407.0 659.5,405.6 660.0,404.0 660.5,401.4 661.0,398.8 661.5,396.7 662.0,395.2 662.5,393.7 663.0,392.2 663.5,391.1 664.0,390.1 664.5,389.1 665.0,388.8 665.5,391.2 666.0,393.6 666.5,396.3 667.0,400.0 667.5,403.7 668.0,406.4 668.5,408.9 669.0,410.8 669.5,411.0 670.0,411.2 670.5,411.4 671.0,411.6 671.5,411.4 672.0,410.8 672.5,410.2 673.0,409.7 673.5,409.1 674.0,408.8 674.5,408.6 675.0,408.3 675.5,408.1 676.0,408.0 676.5,407.8 677.0,409.0 677.5,410.5 678.0,412.0 678.5,413.2 679.0,414.5 679.5,415.5 680.0,416.0 680.5,416.5 681.0,417.0 681.5,416.5 682.0,415.8 682.5,415.0 683.0,414.1 683.5,412.7 684.0,411.2 684.5,409.8 685.0,408.4 685.5,406.8 686.0,405.3 686.5,403.7 687.0,402.2 687.5,400.7 688.0,399.7 688.5,398.7 689.0,397.8 689.5,396.8 690.0,395.9 690.5,395.1 691.0,394.3 691.5,393.5 692.0,393.1 692.5,394.7 693.0,396.3 693.5,399.6 694.0,405.3 694.5,409.8 695.0,409.5 695.5,409.2 696.0,408.8 696.5,408.1 697.0,407.3 697.5,406.5 698.0,405.7 698.5,404.8 699.0,403.7 699.5,402.6 700.0,401.5 700.5,401.3 701.0,401.1 701.5,400.9 702.0,400.7 702.5,401.0 703.0,401.5 703.5,402.1 704.0,402.7 704.5,403.3 705.0,404.0 705.5,404.6 706.0,405.3 706.5,406.0 707.0,406.6 707.5,407.0 708.0,407.2 708.5,407.3 709.0,407.5 709.5,407.7 710.0,407.6 710.5,406.6 711.0,405.6 711.5,404.7 712.0,403.7 712.5,402.8 713.0,402.0 713.5,401.2 714.0,400.4 714.5,399.6 715.0,399.2 715.5,398.9 716.0,398.5 716.5,398.1 717.0,397.8 717.5,397.4 718.0,397.7 718.5,398.3 719.0,398.8 719.5,399.4 720.0,400.2 720.5,401.5 721.0,402.7 721.5,403.9 722.0,404.4 722.5,404.6 723.0,404.8 723.5,405.0 724.0,404.7 724.5,403.9 725.0,403.2 725.5,402.4 726.0,402.3 726.5,402.1 727.0,402.0 727.5,405.7 728.0,409.1 728.5,410.9 729.0,412.8 729.5,414.9 730.0,417.0 730.5,419.1 731.0,418.2 731.5,416.6 732.0,415.0 732.5,414.3 733.0,413.6 733.5,415.6 734.0,421.6 734.5,425.9 735.0,429.1 735.5,432.3 736.0,435.7 736.5,439.1 737.0,443.3 737.5,447.9 738.0,441.6 738.5,435.4 739.0,431.8 739.5,430.0 740.0,428.4 740.5,428.1 741.0,427.7 741.5,427.3 742.0,428.8 742.5,431.3 743.0,435.4 743.5,441.6 744.0,447.9 744.5,454.4 745.0,462.0 745.5,470.0 746.0,477.9 746.5,466.9 747.0,455.9 747.5,444.9 748.0,434.8 748.5,428.3 749.0,423.4 749.5,418.6 750.0,418.2 750.5,417.8 751.0,417.3 751.5,417.1 752.0,417.0 752.5,417.0 753.0,416.9 753.5,416.9 754.0,416.8 754.5,416.7 755.0,416.7 755.5,416.6 756.0,416.5 756.5,416.4 757.0,416.2 757.5,416.0 758.0,415.7 758.5,415.5 759.0,415.2 759.5,414.9 760.0,414.5 760.5,414.1 761.0,413.7 761.5,413.3 762.0,412.9 762.5,413.7 763.0,414.9 763.5,416.1 764.0,417.0 764.5,417.6 765.0,418.1 765.5,418.7 766.0,419.3 766.5,419.9 767.0,420.5 767.5,421.2 768.0,421.8 768.5,422.3 769.0,422.7 769.5,423.0 770.0,423.3 770.5,423.7 771.0,424.0 771.5,424.6 772.0,425.1 772.5,425.7 773.0,426.2 773.5,426.8 774.0,427.2 774.5,427.6 775.0,428.1 775.5,428.5 776.0,428.3 776.5,428.1 777.0,427.9 777.5,427.7 778.0,427.5 778.5,427.2 779.0,426.9 779.5,426.7 780.0,427.7 780.5,428.6 781.0,429.2 781.5,428.2 782.0,427.2 782.5,426.2 783.0,424.8 783.5,423.0 784.0,421.3 784.5,419.5 785.0,417.7 785.5,416.0 786.0,414.2 786.5,412.5 787.0,410.7 787.5,409.0 788.0,407.3 788.5,406.1 789.0,405.1 789.5,404.1 790.0,403.2 790.5,402.9 791.0,402.5 791.5,402.1 792.0,402.1 792.5,402.1 793.0,402.2 793.5,402.3 794.0,402.4 794.5,402.7 795.0,402.9 795.5,403.2 796.0,403.5 796.5,403.8 797.0,404.1 797.5,401.8 798.0,398.8 798.5,395.8 799.0,393.3 799.5,390.8 800.0,389.2 800.5,388.6 801.0,388.1 801.5,389.8 802.0,392.0 802.5,394.3 803.0,395.5 803.5,396.7 804.0,397.9 804.5,402.0 805.0,406.1 805.5,409.9 806.0,413.3 806.5,416.8 807.0,422.5 807.5,428.3 808.0,429.7 808.5,430.2 809.0,430.6 809.5,431.0 810.0,431.3 810.5,431.5 811.0,431.7 811.5,431.9 812.0,432.2 812.5,432.8 813.0,433.3 813.5,433.9 814.0,434.5 814.5,434.6 815.0,434.4 815.5,434.2 816.0,434.0 816.5,433.8 817.0,433.6 817.5,433.4 818.0,433.2 818.5,433.0 819.0,433.6 819.5,434.9 820.0,436.1 820.5,437.4 821.0,437.6 821.5,437.8 822.0,438.0 822.5,438.2 823.0,437.8 823.5,437.0 824.0,436.2 824.5,435.4 825.0,434.6 825.5,434.4 826.0,434.2 826.5,434.0 827.0,433.8 827.5,435.4 828.0,438.3 828.5,441.2 829.0,443.0 829.5,444.5 830.0,446.0 830.5,447.4 831.0,448.4 831.5,449.4 832.0,450.5 832.5,451.5 833.0,450.5 833.5,449.1 834.0,447.6 834.5,446.2 835.0,445.4 835.5,447.5 836.0,449.6 836.5,451.8 837.0,452.6 837.5,452.6 838.0,452.6 838.5,452.6 839.0,452.6 839.5,452.8 840.0,453.0 840.5,453.2 841.0,453.4 841.5,453.7 842.0,454.0 842.5,454.4 843.0,454.7 843.5,455.0 844.0,455.8 844.5,458.3 845.0,460.7 845.5,463.2 846.0,464.3 846.5,464.6 847.0,464.9 847.5,465.1 848.0,464.3 848.5,463.6 849.0,462.8 849.5,462.2 850.0,461.6 850.5,461.0 851.0,460.4 851.5,459.8 852.0,460.7 852.5,461.9 853.0,463.2 853.5,463.6 854.0,460.5 854.5,457.4 855.0,455.9 855.5,455.4 856.0,454.9 856.5,454.4 857.0,453.1 857.5,451.9 858.0,450.6 858.5,449.6 859.0,448.8 859.5,448.1 860.0,447.4 860.5,445.6 861.0,443.6 861.5,441.6 862.0,439.9 862.5,439.5 863.0,439.1 863.5,438.7 864.0,438.4 864.5,438.0 865.0,437.7 865.5,437.3 866.0,437.0 866.5,436.5 867.0,435.3 867.5,434.2 868.0,433.0 868.5,431.9 869.0,431.5 869.5,431.1 870.0,430.8 870.5,430.4 871.0,429.9 871.5,429.2 872.0,428.5 872.5,427.7 873.0,427.2 873.5,426.7 874.0,426.3 874.5,425.9 875.0,426.4 875.5,426.9 876.0,427.5 876.5,428.0 877.0,428.8 877.5,430.1 878.0,431.3 878.5,432.5 879.0,433.3 879.5,433.9 880.0,434.5 880.5,435.1 881.0,436.0 881.5,437.1 882.0,438.2 882.5,439.4 883.0,439.3 883.5,438.9 884.0,438.5 884.5,438.5 885.0,439.7 885.5,440.9 886.0,442.2 886.5,443.1 887.0,443.7 887.5,444.4 888.0,445.0 888.5,445.6 889.0,446.2 889.5,446.8 890.0,447.4 890.5,448.0 891.0,448.6 891.5,449.2 892.0,449.9 892.5,450.5 893.0,451.1 893.5,451.5 894.0,451.9 894.5,452.4 895.0,453.4 895.5,455.2 896.0,457.1 896.5,457.2 897.0,457.4 897.5,457.5 898.0,457.7 898.5,457.8 899.0,457.5 899.5,457.0 900.0,456.4 900.5,455.8 901.0,455.2 901.5,454.5 902.0,453.8 902.5,453.2 903.0,453.4 903.5,454.4 904.0,455.3 904.5,456.2 905.0,456.7 905.5,457.1 906.0,457.6 906.5,458.0 907.0,458.2 907.5,457.9 908.0,457.7 908.5,457.5 909.0,457.2 909.5,457.2 910.0,457.3 910.5,457.4 911.0,457.5 911.5,457.4 912.0,456.8 912.5,456.2 913.0,455.6 913.5,455.0 914.0,454.4 914.5,454.6 915.0,454.9 915.5,455.2 916.0,455.2 916.5,455.0 917.0,454.9 917.5,454.7 918.0,454.5 918.5,455.5 919.0,457.3 919.5,459.2 920.0,461.2 920.5,463.2 921.0,465.2 921.5,465.3 922.0,464.0 922.5,462.8 923.0,461.5 923.5,461.4 924.0,461.3 924.5,462.0 925.0,464.0 925.5,466.1 926.0,467.2 926.5,467.7 927.0,468.2 927.5,468.7 928.0,467.4 928.5,466.2 929.0,464.9 929.5,463.7 930.0,462.4 930.5,461.2 931.0,460.0 931.5,458.1 932.0,456.1 932.5,454.2 933.0,452.4 933.5,451.7 934.0,451.0 934.5,450.2 935.0,450.1 935.5,450.6 936.0,451.0 936.5,451.4 937.0,451.5 937.5,450.8 938.0,450.0 938.5,449.2 939.0,448.4 939.5,447.8 940.0,447.3 940.5,446.8 941.0,446.3 941.5,447.1 942.0,447.8 942.5,448.6 943.0,449.5 943.5,450.8 944.0,452.0 944.5,453.2 945.0,454.0 945.5,454.6 946.0,455.1 946.5,455.7 947.0,456.4 947.5,457.2 948.0,457.9 948.5,458.7 949.0,459.5 949.5,461.7 950.0,464.2 950.5,464.0 951.0,463.8 951.5,463.6 952.0,463.4 952.5,463.5 953.0,463.9 953.5,464.3 954.0,464.7 954.5,465.1 955.0,466.6 955.5,468.1 956.0,469.6 956.5,471.2 957.0,473.0 957.5,474.7 958.0,476.4 958.5,477.8 959.0,479.1 959.5,480.3 960.0,481.4 960.5,481.9 961.0,482.4 961.5,482.9 962.0,483.0 962.5,482.8 963.0,482.7 963.5,482.5 964.0,482.3 964.5,482.2 965.0,481.9 965.5,481.7 966.0,481.4 966.5,481.2 967.0,480.9 967.5,481.2 968.0,481.5 968.5,481.9 969.0,482.2 969.5,482.5 970.0,482.7 970.5,482.8 971.0,482.9 971.5,483.1 972.0,483.3 972.5,483.5 973.0,483.7 973.5,483.9 974.0,483.7 974.5,483.2 975.0,482.7 975.5,482.2 976.0,485.2 976.5,488.2 977.0,491.2 977.5,492.4 978.0,493.7 978.5,494.9 979.0,495.6 979.5,496.3 980.0,497.1 980.5,496.7 981.0,495.4 981.5,494.2 982.0,492.9 982.5,491.7 983.0,490.5 983.5,489.2 984.0,488.3 984.5,487.9 985.0,487.5 985.5,487.1 986.0,486.7 986.5,487.1 987.0,487.6 987.5,488.0 988.0,488.4 988.5,487.1 989.0,485.4 989.5,483.6 990.0,482.0 990.5,481.1 991.0,480.2 991.5,479.3 992.0,479.6 992.5,480.8 993.0,481.9 993.5,483.1 994.0,484.1 994.5,485.1 995.0,486.1 995.5,487.6 996.0,490.0 996.5,492.4 997.0,494.3 997.5,495.6 998.0,496.9 998.5,495.8 999.0,493.0 999.5,490.3 1000.0,487.6 1000.5,483.6 1001.0,479.6 1001.5,475.6 1002.0,472.2 1002.5,469.7 1003.0,467.2 1003.5,464.7 1004.0,462.0 1004.5,459.2 1005.0,456.7 1005.5,455.2 1006.0,453.7 1006.5,455.6 1007.0,458.3 1007.5,461.0 1008.0,463.8 1008.5,466.7 1009.0,469.6 1009.5,472.1 1010.0,474.6 1010.5,477.1 1011.0,479.2 1011.5,480.7 1012.0,482.2 1012.5,483.7 1013.0,484.2 1013.5,484.4 1014.0,484.6 1014.5,484.8 1015.0,485.3 1015.5,486.1 1016.0,486.8 1016.5,487.6 1017.0,490.6 1017.5,493.5 1018.0,496.5 1018.5,499.0 1019.0,501.5 1019.5,504.0 1020.0,506.0 1020.5,507.1 1021.0,508.2 1021.5,505.1 1022.0,502.0 1022.5,498.8 1023.0,495.6 1023.5,492.5 1024.0,490.5 1024.5,489.4 1025.0,488.3 1025.5,487.2 1026.0,486.8 1026.5,486.4 1027.0,486.0 1027.5,485.6 1028.0,486.1 1028.5,487.2 1029.0,488.3 1029.5,489.4 1030.0,489.6 1030.5,489.9 1031.0,490.2 1031.5,490.0 1032.0,489.2 1032.5,488.5 1033.0,487.7 1033.5,489.1 1034.0,491.0 1034.5,492.9 1035.0,494.7 1035.5,496.5 1036.0,498.3 1036.5,500.1 1037.0,501.8 1037.5,503.6 1038.0,505.0 1038.5,506.0 1039.0,507.0 1039.5,508.0 1040.0,510.3 1040.5,512.9 1041.0,515.1 1041.5,516.4 1042.0,517.8 1042.5,517.3 1043.0,516.4 1043.5,515.4 1044.0,514.4 1044.5,513.4 1045.0,512.4 1045.5,511.4 1046.0,510.5 1046.5,509.6 1047.0,507.9 1047.5,504.9 1048.0,501.9 1048.5,497.8 1049.0,493.7 1049.5,490.0 1050.0,487.1 1050.5,484.3 1051.0,482.4 1051.5,481.1 1052.0,481.4 1052.5,484.0 1053.0,486.6 1053.5,489.0 1054.0,491.4 1054.5,493.8 1055.0,495.5 1055.5,496.8 1056.0,498.0 1056.5,497.3 1057.0,496.1 1057.5,494.9 1058.0,493.9 1058.5,492.9 1059.0,495.9 1059.5,498.9 1060.0,501.9 1060.5,504.9 1061.0,507.9 1061.5,511.8 1062.0,516.3 1062.5,520.3 1063.0,522.4 1063.5,524.5 1064.0,526.3 1064.5,527.9 1065.0,529.5 1065.5,527.0 1066.0,523.5 1066.5,523.5 1067.0,523.5 1067.5,523.5 1068.0,524.1 1068.5,525.4 1069.0,526.8 1069.5,525.9 1070.0,524.4 1070.5,522.9 1071.0,521.5 1071.5,520.5 1072.0,519.5 1072.5,518.5 1073.0,518.5 1073.5,519.1 1074.0,519.8 1074.5,520.7 1075.0,521.7 1075.5,522.7 1076.0,524.5 1076.5,529.4 1077.0,534.3 1077.5,540.0 1078.0,545.8 1078.5,550.5 1079.0,555.0 1079.5,549.0 1080.0,543.4 1080.5,549.9 1081.0,556.4 1081.5,562.9 1082.0,557.8 1082.5,552.7 1083.0,547.6 1083.5,542.5 1084.0,542.3 1084.5,545.4 1085.0,548.4 1085.5,550.5 1086.0,552.1 1086.5,553.7 1087.0,555.3 1087.5,554.4 1088.0,550.1 1088.5,545.7 1089.0,541.3 1089.5,536.4 1090.0,531.5 1090.5,526.7 1091.0,524.0 1091.5,522.8 1092.0,521.6 1092.5,520.4 1093.0,518.2 1093.5,514.5 1094.0,510.8 1094.5,507.0 1095.0,504.4 1095.5,503.4 1096.0,502.4 1096.5,501.4 1097.0,500.4 1097.5,499.5 1098.0,498.9 1098.5,498.2 1099.0,497.6 1099.5,496.9 1100.0,494.5 1100.5,489.7 1101.0,484.8 1101.5,479.9 1102.0,475.4 1102.5,471.0 1103.0,470.1 1103.5,474.5 1104.0,479.0 1104.5,485.2 1105.0,491.7 1105.5,498.3 1106.0,502.2 1106.5,505.1 1107.0,508.0 1107.5,509.5 1108.0,508.7 1108.5,507.9 1109.0,507.0 1109.5,507.0 1110.0,509.9 1110.5,512.9 1111.0,515.8 1111.5,519.7 1112.0,523.9 1112.5,528.0 1113.0,529.9 1113.5,530.3 1114.0,530.7 1114.5,531.1 1115.0,532.8 1115.5,535.2 1116.0,537.6 1116.5,540.3 1117.0,543.6 1117.5,546.9 1118.0,550.2 1118.5,552.5 1119.0,550.8 1119.5,549.0 1120.0,547.2 1120.5,545.4 1121.0,544.9 1121.5,544.4 1122.0,543.9 1122.5,543.4 1123.0,542.9 1123.5,540.0 1124.0,537.1 1124.5,534.2 1125.0,531.3 1125.5,528.9 1126.0,526.4 1126.5,524.0 1127.0,525.3 1127.5,529.2 1128.0,533.0 1128.5,538.7 1129.0,544.5 1129.5,543.5 1130.0,535.2 1130.5,528.7 1131.0,524.6 1131.5,526.3 1132.0,528.0 1132.5,529.7 1133.0,529.2 1133.5,528.8 1134.0,528.3 1134.5,529.9 1135.0,534.8 1135.5,539.6 1136.0,546.1 1136.5,554.4 1137.0,559.8 1137.5,562.1 1138.0,564.5 1138.5,563.2 1139.0,561.9 1139.5,560.7 1140.0,557.1 1140.5,552.9 1141.0,548.8 1141.5,544.6 1142.0,547.6 1142.5,552.4 1143.0,556.4 1143.5,557.4 1144.0,558.3 1144.5,559.3 1145.0,556.8 1145.5,553.4 1146.0,549.9 1146.5,547.0 1147.0,544.7 1147.5,542.4 1148.0,541.2 1148.5,544.8 1149.0,548.4 1149.5,552.0 1150.0,559.0 1150.5,570.0 1151.0,581.5 1151.5,592.0 1152.0,589.0 1152.5,586.0 1153.0,583.0 1153.5,580.3 1154.0,577.6 1154.5,583.8 1155.0,596.0" fill="none" stroke="#68f2c0" stroke-width="1.05" stroke-opacity="0.92" stroke-linejoin="round"/>
<rect x="23.5" y="674.8" width="1135.2" height="3.8" fill="#000"/>
<path d="M1159.5 87V680.1M1159.5 90.2H1168M1159.5 94.8H1165M1159.5 99.3H1165M1159.5 103.9H1165M1159.5 108.5H1165M1159.5 113.1H1168M1159.5 117.6H1165M1159.5 122.2H1165M1159.5 126.8H1165M1159.5 131.4H1165M1159.5 135.9H1168M1159.5 140.5H1165M1159.5 145.1H1165M1159.5 149.7H1165M1159.5 154.2H1165M1159.5 158.8H1168M1159.5 163.4H1165M1159.5 168.0H1165M1159.5 172.5H1165M1159.5 177.1H1165M1159.5 181.7H1168M1159.5 186.3H1165M1159.5 190.8H1165M1159.5 195.4H1165M1159.5 200.0H1165M1159.5 204.6H1168M1159.5 209.1H1165M1159.5 213.7H1165M1159.5 218.3H1165M1159.5 222.8H1165M1159.5 227.4H1168M1159.5 232.0H1165M1159.5 236.6H1165M1159.5 241.1H1165M1159.5 245.7H1165M1159.5 250.3H1168M1159.5 254.9H1165M1159.5 259.4H1165M1159.5 264.0H1165M1159.5 268.6H1165M1159.5 273.2H1168M1159.5 277.7H1165M1159.5 282.3H1165M1159.5 286.9H1165M1159.5 291.5H1165M1159.5 296.0H1168M1159.5 300.6H1165M1159.5 305.2H1165M1159.5 309.8H1165M1159.5 314.3H1165M1159.5 318.9H1168M1159.5 323.5H1165M1159.5 328.0H1165M1159.5 332.6H1165M1159.5 337.2H1165M1159.5 341.8H1168M1159.5 346.3H1165M1159.5 350.9H1165M1159.5 355.5H1165M1159.5 360.1H1165M1159.5 364.6H1168M1159.5 369.2H1165M1159.5 373.8H1165M1159.5 378.4H1165M1159.5 382.9H1165M1159.5 387.5H1168M1159.5 392.1H1165M1159.5 396.7H1165M1159.5 401.2H1165M1159.5 405.8H1165M1159.5 410.4H1168M1159.5 415.0H1165M1159.5 419.5H1165M1159.5 424.1H1165M1159.5 428.7H1165M1159.5 433.2H1168M1159.5 437.8H1165M1159.5 442.4H1165M1159.5 447.0H1165M1159.5 451.5H1165M1159.5 456.1H1168M1159.5 460.7H1165M1159.5 465.3H1165M1159.5 469.8H1165M1159.5 474.4H1165M1159.5 479.0H1168M1159.5 483.6H1165M1159.5 488.1H1165M1159.5 492.7H1165M1159.5 497.3H1165M1159.5 501.9H1168M1159.5 506.4H1165M1159.5 511.0H1165M1159.5 515.6H1165M1159.5 520.2H1165M1159.5 524.7H1168M1159.5 529.3H1165M1159.5 533.9H1165M1159.5 538.5H1165M1159.5 543.0H1165M1159.5 547.6H1168M1159.5 552.2H1165M1159.5 556.7H1165M1159.5 561.3H1165M1159.5 565.9H1165M1159.5 570.5H1168M1159.5 575.0H1165M1159.5 579.6H1165M1159.5 584.2H1165M1159.5 588.8H1165M1159.5 593.3H1168M1159.5 597.9H1165M1159.5 602.5H1165M1159.5 607.1H1165M1159.5 611.6H1165M1159.5 616.2H1168M1159.5 620.8H1165M1159.5 625.4H1165M1159.5 629.9H1165M1159.5 634.5H1165M1159.5 639.1H1168M1159.5 643.7H1165M1159.5 648.2H1165M1159.5 652.8H1165M1159.5 657.4H1165M1159.5 662.0H1168M1159.5 666.5H1165M1159.5 671.1H1165M1159.5 675.7H1165" stroke="#d6d2dc" stroke-width="1" fill="none"/>
<text x="1172.3" y="94.6" class="rl">dB</text>
<text x="1172.3" y="117.5" class="rl">-5</text>
<text x="1172.3" y="140.3" class="rl">-10</text>
<text x="1172.3" y="163.2" class="rl">-15</text>
<text x="1172.3" y="186.1" class="rl">-20</text>
<text x="1172.3" y="209.0" class="rl">-25</text>
<text x="1172.3" y="231.8" class="rl">-30</text>
<text x="1172.3" y="254.7" class="rl">-35</text>
<text x="1172.3" y="277.6" class="rl">-40</text>
<text x="1172.3" y="300.4" class="rl">-45</text>
<text x="1172.3" y="323.3" class="rl">-50</text>
<text x="1172.3" y="346.2" class="rl">-55</text>
<text x="1172.3" y="369.0" class="rl">-60</text>
<text x="1172.3" y="391.9" class="rl">-65</text>
<text x="1172.3" y="414.8" class="rl">-70</text>
<text x="1172.3" y="437.6" class="rl">-75</text>
<text x="1172.3" y="460.5" class="rl">-80</text>
<text x="1172.3" y="483.4" class="rl">-85</text>
<text x="1172.3" y="506.3" class="rl">-90</text>
<text x="1172.3" y="529.1" class="rl">-95</text>
<text x="1172.3" y="552.0" class="rl">-100</text>
<text x="1172.3" y="574.9" class="rl">-105</text>
<text x="1172.3" y="597.7" class="rl">-110</text>
<text x="1172.3" y="620.6" class="rl">-115</text>
<text x="1172.3" y="643.5" class="rl">-120</text>
<text x="1172.3" y="666.4" class="rl">-125</text>
<path d="M23.5 679.6H1159.5M27.4 679.6V687.8M37.6 679.6V685.2M47.9 679.6V685.2M58.1 679.6V685.2M68.3 679.6V685.2M78.5 679.6V687.8M88.8 679.6V685.2M99.0 679.6V685.2M109.2 679.6V685.2M119.5 679.6V685.2M129.7 679.6V687.8M139.9 679.6V685.2M150.2 679.6V685.2M160.4 679.6V685.2M170.6 679.6V685.2M180.8 679.6V687.8M191.1 679.6V685.2M201.3 679.6V685.2M211.5 679.6V685.2M221.8 679.6V685.2M232.0 679.6V687.8M242.2 679.6V685.2M252.5 679.6V685.2M262.7 679.6V685.2M272.9 679.6V685.2M283.1 679.6V687.8M293.4 679.6V685.2M303.6 679.6V685.2M313.8 679.6V685.2M324.1 679.6V685.2M334.3 679.6V687.8M344.5 679.6V685.2M354.8 679.6V685.2M365.0 679.6V685.2M375.2 679.6V685.2M385.4 679.6V687.8M395.7 679.6V685.2M405.9 679.6V685.2M416.1 679.6V685.2M426.4 679.6V685.2M436.6 679.6V687.8M446.8 679.6V685.2M457.1 679.6V685.2M467.3 679.6V685.2M477.5 679.6V685.2M487.8 679.6V687.8M498.0 679.6V685.2M508.2 679.6V685.2M518.4 679.6V685.2M528.7 679.6V685.2M538.9 679.6V687.8M549.1 679.6V685.2M559.4 679.6V685.2M569.6 679.6V685.2M579.8 679.6V685.2M590.0 679.6V687.8M600.3 679.6V685.2M610.5 679.6V685.2M620.7 679.6V685.2M631.0 679.6V685.2M641.2 679.6V687.8M651.4 679.6V685.2M661.7 679.6V685.2M671.9 679.6V685.2M682.1 679.6V685.2M692.4 679.6V687.8M702.6 679.6V685.2M712.8 679.6V685.2M723.0 679.6V685.2M733.3 679.6V685.2M743.5 679.6V687.8M753.7 679.6V685.2M764.0 679.6V685.2M774.2 679.6V685.2M784.4 679.6V685.2M794.6 679.6V687.8M804.9 679.6V685.2M815.1 679.6V685.2M825.3 679.6V685.2M835.6 679.6V685.2M845.8 679.6V687.8M856.0 679.6V685.2M866.3 679.6V685.2M876.5 679.6V685.2M886.7 679.6V685.2M896.9 679.6V687.8M907.2 679.6V685.2M917.4 679.6V685.2M927.6 679.6V685.2M937.9 679.6V685.2M948.1 679.6V687.8M958.3 679.6V685.2M968.6 679.6V685.2M978.8 679.6V685.2M989.0 679.6V685.2M999.2 679.6V687.8M1009.5 679.6V685.2M1019.7 679.6V685.2M1029.9 679.6V685.2M1040.2 679.6V685.2M1050.4 679.6V687.8M1060.6 679.6V685.2M1070.9 679.6V685.2M1081.1 679.6V685.2M1091.3 679.6V685.2M1101.6 679.6V687.8M1111.8 679.6V685.2M1122.0 679.6V685.2M1132.2 679.6V685.2M1142.5 679.6V685.2M1152.7 679.6V687.8" stroke="#d6d2dc" stroke-width="1" fill="none"/>
<text x="27.9" y="700.3" text-anchor="middle" class="rl">Hz</text>
<text x="79.0" y="700.3" text-anchor="middle" class="rl">1k</text>
<text x="130.2" y="700.3" text-anchor="middle" class="rl">2k</text>
<text x="181.3" y="700.3" text-anchor="middle" class="rl">3k</text>
<text x="232.5" y="700.3" text-anchor="middle" class="rl">4k</text>
<text x="283.6" y="700.3" text-anchor="middle" class="rl">5k</text>
<text x="334.8" y="700.3" text-anchor="middle" class="rl">6k</text>
<text x="385.9" y="700.3" text-anchor="middle" class="rl">7k</text>
<text x="437.1" y="700.3" text-anchor="middle" class="rl">8k</text>
<text x="488.2" y="700.3" text-anchor="middle" class="rl">9k</text>
<text x="539.4" y="700.3" text-anchor="middle" class="rl">10k</text>
<text x="590.5" y="700.3" text-anchor="middle" class="rl">11k</text>
<text x="641.7" y="700.3" text-anchor="middle" class="rl">12k</text>
<text x="692.8" y="700.3" text-anchor="middle" class="rl">13k</text>
<text x="744.0" y="700.3" text-anchor="middle" class="rl">14k</text>
<text x="795.1" y="700.3" text-anchor="middle" class="rl">15k</text>
<text x="846.3" y="700.3" text-anchor="middle" class="rl">16k</text>
<text x="897.4" y="700.3" text-anchor="middle" class="rl">17k</text>
<text x="948.6" y="700.3" text-anchor="middle" class="rl">18k</text>
<text x="999.8" y="700.3" text-anchor="middle" class="rl">19k</text>
<text x="1050.9" y="700.3" text-anchor="middle" class="rl">20k</text>
<text x="1102.0" y="700.3" text-anchor="middle" class="rl">21k</text>
<text x="1153.2" y="700.3" text-anchor="middle" class="rl">22k</text>
<text x="29.5" y="100" class="scan">已扫描选区</text>
</svg>
<div class="abs" id="wm1">矿石收音机</div>
<div class="abs" id="wm2">www.crystalradio.cn</div>
</body>
</html>
